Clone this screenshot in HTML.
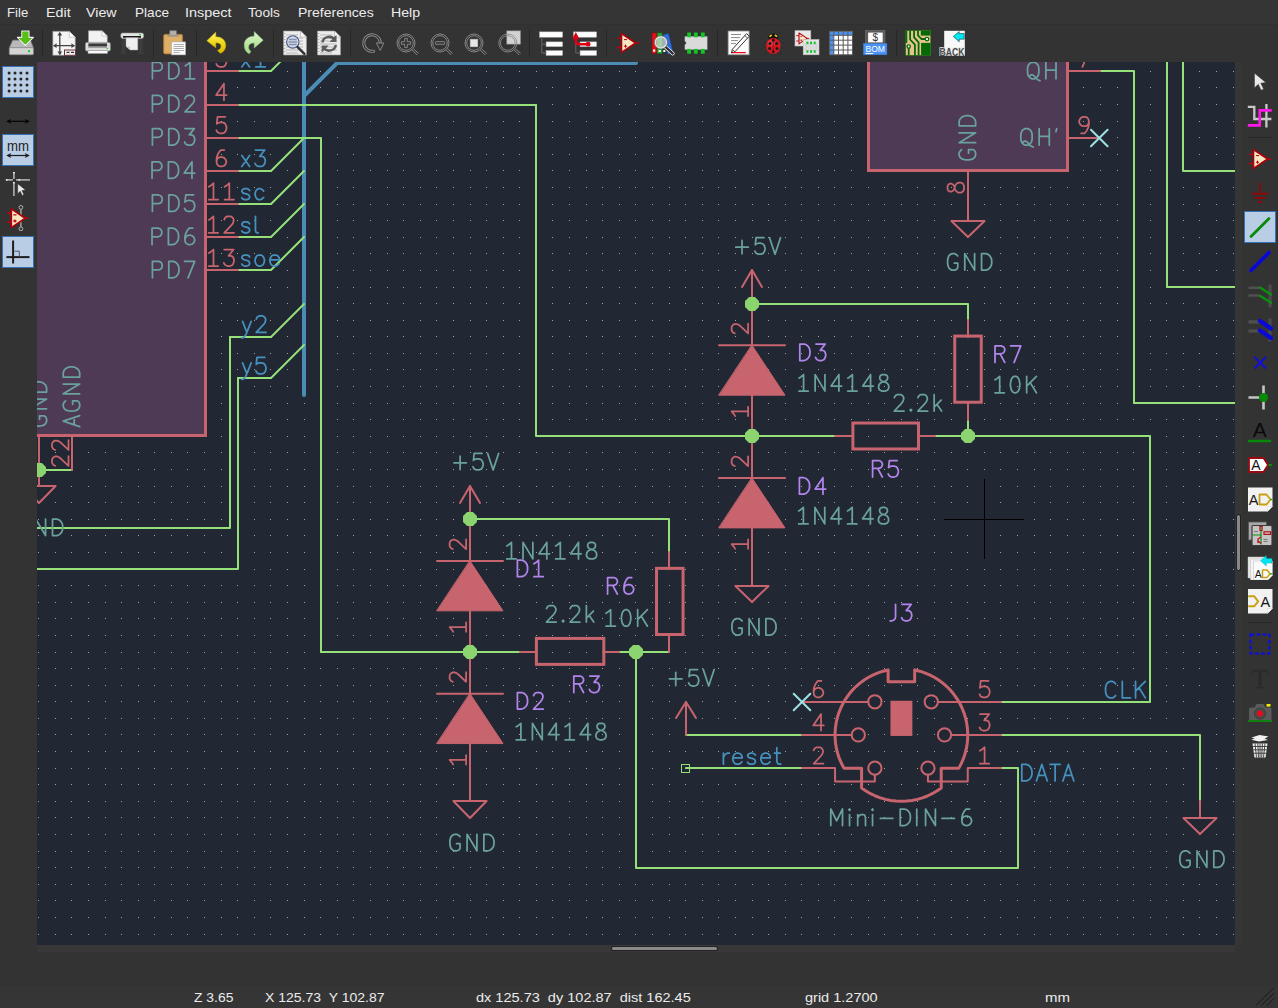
<!DOCTYPE html>
<html><head><meta charset="utf-8"><title>Eeschema</title>
<style>
html,body{margin:0;padding:0;}
body{width:1278px;height:1008px;overflow:hidden;background:#333333;position:relative;font-family:"Liberation Sans",sans-serif;color:#e6e6e6;}
#menubar{position:absolute;left:0;top:0;width:1278px;height:24px;background:#353535;border-bottom:1px solid #303030;}
#menubar span{position:absolute;top:4.7px;font-size:13px;line-height:16px;color:#ececec;white-space:nowrap;transform-origin:0 0;}
#canvas{position:absolute;left:37px;top:62px;width:1198px;height:883px;background:#222833;overflow:hidden;}
#canvas svg{position:absolute;left:0;top:0;}
#status span{position:absolute;top:989.7px;font-size:13px;line-height:16px;color:#ececec;white-space:pre;transform-origin:0 0;}
.ico{position:absolute;}
.sep{position:absolute;width:1px;background:#272727;}
.sel{position:absolute;width:30px;height:30px;background:#b9cde5;border:1px solid #3771b8;}
</style></head><body>
<div id="menubar">
<span style="left:7.4px;transform:scaleX(1.012)">File</span><span style="left:45.5px;transform:scaleX(1.098)">Edit</span><span style="left:86.4px;transform:scaleX(1.095)">View</span><span style="left:134.7px;transform:scaleX(1.045)">Place</span><span style="left:185.4px;transform:scaleX(1.112)">Inspect</span><span style="left:248.3px;transform:scaleX(1.051)">Tools</span><span style="left:297.6px;transform:scaleX(1.080)">Preferences</span><span style="left:390.6px;transform:scaleX(1.088)">Help</span>
</div>
<div id="canvas"><svg width="1198" height="883" viewBox="37 62 1198 883" fill="none" stroke-linecap="round" stroke-linejoin="round">
<path d="M38 71.5h1m16 0h1m15 0h1m16 0h1m16 0h1m15 0h1m16 0h1m15 0h1m16 0h1m15 0h1m16 0h1m16 0h1m15 0h1m16 0h1m15 0h1m16 0h1m16 0h1m15 0h1m16 0h1m15 0h1m16 0h1m16 0h1m15 0h1m16 0h1m15 0h1m16 0h1m16 0h1m15 0h1m16 0h1m15 0h1m16 0h1m15 0h1m16 0h1m16 0h1m15 0h1m16 0h1m15 0h1m16 0h1m16 0h1m15 0h1m16 0h1m15 0h1m16 0h1m16 0h1m15 0h1m16 0h1m15 0h1m16 0h1m15 0h1m16 0h1m16 0h1m15 0h1m16 0h1m15 0h1m16 0h1m16 0h1m15 0h1m16 0h1m15 0h1m16 0h1m16 0h1m15 0h1m16 0h1m15 0h1m16 0h1m16 0h1m15 0h1m16 0h1m15 0h1m16 0h1m15 0h1m16 0h1m16 0h1M38 87.5h1m16 0h1m15 0h1m16 0h1m16 0h1m15 0h1m16 0h1m15 0h1m16 0h1m15 0h1m16 0h1m16 0h1m15 0h1m16 0h1m15 0h1m16 0h1m16 0h1m15 0h1m16 0h1m15 0h1m16 0h1m16 0h1m15 0h1m16 0h1m15 0h1m16 0h1m16 0h1m15 0h1m16 0h1m15 0h1m16 0h1m15 0h1m16 0h1m16 0h1m15 0h1m16 0h1m15 0h1m16 0h1m16 0h1m15 0h1m16 0h1m15 0h1m16 0h1m16 0h1m15 0h1m16 0h1m15 0h1m16 0h1m15 0h1m16 0h1m16 0h1m15 0h1m16 0h1m15 0h1m16 0h1m16 0h1m15 0h1m16 0h1m15 0h1m16 0h1m16 0h1m15 0h1m16 0h1m15 0h1m16 0h1m16 0h1m15 0h1m16 0h1m15 0h1m16 0h1m15 0h1m16 0h1m16 0h1M38 104.5h1m16 0h1m15 0h1m16 0h1m16 0h1m15 0h1m16 0h1m15 0h1m16 0h1m15 0h1m16 0h1m16 0h1m15 0h1m16 0h1m15 0h1m16 0h1m16 0h1m15 0h1m16 0h1m15 0h1m16 0h1m16 0h1m15 0h1m16 0h1m15 0h1m16 0h1m16 0h1m15 0h1m16 0h1m15 0h1m16 0h1m15 0h1m16 0h1m16 0h1m15 0h1m16 0h1m15 0h1m16 0h1m16 0h1m15 0h1m16 0h1m15 0h1m16 0h1m16 0h1m15 0h1m16 0h1m15 0h1m16 0h1m15 0h1m16 0h1m16 0h1m15 0h1m16 0h1m15 0h1m16 0h1m16 0h1m15 0h1m16 0h1m15 0h1m16 0h1m16 0h1m15 0h1m16 0h1m15 0h1m16 0h1m16 0h1m15 0h1m16 0h1m15 0h1m16 0h1m15 0h1m16 0h1m16 0h1M38 121.5h1m16 0h1m15 0h1m16 0h1m16 0h1m15 0h1m16 0h1m15 0h1m16 0h1m15 0h1m16 0h1m16 0h1m15 0h1m16 0h1m15 0h1m16 0h1m16 0h1m15 0h1m16 0h1m15 0h1m16 0h1m16 0h1m15 0h1m16 0h1m15 0h1m16 0h1m16 0h1m15 0h1m16 0h1m15 0h1m16 0h1m15 0h1m16 0h1m16 0h1m15 0h1m16 0h1m15 0h1m16 0h1m16 0h1m15 0h1m16 0h1m15 0h1m16 0h1m16 0h1m15 0h1m16 0h1m15 0h1m16 0h1m15 0h1m16 0h1m16 0h1m15 0h1m16 0h1m15 0h1m16 0h1m16 0h1m15 0h1m16 0h1m15 0h1m16 0h1m16 0h1m15 0h1m16 0h1m15 0h1m16 0h1m16 0h1m15 0h1m16 0h1m15 0h1m16 0h1m15 0h1m16 0h1m16 0h1M38 137.5h1m16 0h1m15 0h1m16 0h1m16 0h1m15 0h1m16 0h1m15 0h1m16 0h1m15 0h1m16 0h1m16 0h1m15 0h1m16 0h1m15 0h1m16 0h1m16 0h1m15 0h1m16 0h1m15 0h1m16 0h1m16 0h1m15 0h1m16 0h1m15 0h1m16 0h1m16 0h1m15 0h1m16 0h1m15 0h1m16 0h1m15 0h1m16 0h1m16 0h1m15 0h1m16 0h1m15 0h1m16 0h1m16 0h1m15 0h1m16 0h1m15 0h1m16 0h1m16 0h1m15 0h1m16 0h1m15 0h1m16 0h1m15 0h1m16 0h1m16 0h1m15 0h1m16 0h1m15 0h1m16 0h1m16 0h1m15 0h1m16 0h1m15 0h1m16 0h1m16 0h1m15 0h1m16 0h1m15 0h1m16 0h1m16 0h1m15 0h1m16 0h1m15 0h1m16 0h1m15 0h1m16 0h1m16 0h1M38 154.5h1m16 0h1m15 0h1m16 0h1m16 0h1m15 0h1m16 0h1m15 0h1m16 0h1m15 0h1m16 0h1m16 0h1m15 0h1m16 0h1m15 0h1m16 0h1m16 0h1m15 0h1m16 0h1m15 0h1m16 0h1m16 0h1m15 0h1m16 0h1m15 0h1m16 0h1m16 0h1m15 0h1m16 0h1m15 0h1m16 0h1m15 0h1m16 0h1m16 0h1m15 0h1m16 0h1m15 0h1m16 0h1m16 0h1m15 0h1m16 0h1m15 0h1m16 0h1m16 0h1m15 0h1m16 0h1m15 0h1m16 0h1m15 0h1m16 0h1m16 0h1m15 0h1m16 0h1m15 0h1m16 0h1m16 0h1m15 0h1m16 0h1m15 0h1m16 0h1m16 0h1m15 0h1m16 0h1m15 0h1m16 0h1m16 0h1m15 0h1m16 0h1m15 0h1m16 0h1m15 0h1m16 0h1m16 0h1M38 170.5h1m16 0h1m15 0h1m16 0h1m16 0h1m15 0h1m16 0h1m15 0h1m16 0h1m15 0h1m16 0h1m16 0h1m15 0h1m16 0h1m15 0h1m16 0h1m16 0h1m15 0h1m16 0h1m15 0h1m16 0h1m16 0h1m15 0h1m16 0h1m15 0h1m16 0h1m16 0h1m15 0h1m16 0h1m15 0h1m16 0h1m15 0h1m16 0h1m16 0h1m15 0h1m16 0h1m15 0h1m16 0h1m16 0h1m15 0h1m16 0h1m15 0h1m16 0h1m16 0h1m15 0h1m16 0h1m15 0h1m16 0h1m15 0h1m16 0h1m16 0h1m15 0h1m16 0h1m15 0h1m16 0h1m16 0h1m15 0h1m16 0h1m15 0h1m16 0h1m16 0h1m15 0h1m16 0h1m15 0h1m16 0h1m16 0h1m15 0h1m16 0h1m15 0h1m16 0h1m15 0h1m16 0h1m16 0h1M38 187.5h1m16 0h1m15 0h1m16 0h1m16 0h1m15 0h1m16 0h1m15 0h1m16 0h1m15 0h1m16 0h1m16 0h1m15 0h1m16 0h1m15 0h1m16 0h1m16 0h1m15 0h1m16 0h1m15 0h1m16 0h1m16 0h1m15 0h1m16 0h1m15 0h1m16 0h1m16 0h1m15 0h1m16 0h1m15 0h1m16 0h1m15 0h1m16 0h1m16 0h1m15 0h1m16 0h1m15 0h1m16 0h1m16 0h1m15 0h1m16 0h1m15 0h1m16 0h1m16 0h1m15 0h1m16 0h1m15 0h1m16 0h1m15 0h1m16 0h1m16 0h1m15 0h1m16 0h1m15 0h1m16 0h1m16 0h1m15 0h1m16 0h1m15 0h1m16 0h1m16 0h1m15 0h1m16 0h1m15 0h1m16 0h1m16 0h1m15 0h1m16 0h1m15 0h1m16 0h1m15 0h1m16 0h1m16 0h1M38 204.5h1m16 0h1m15 0h1m16 0h1m16 0h1m15 0h1m16 0h1m15 0h1m16 0h1m15 0h1m16 0h1m16 0h1m15 0h1m16 0h1m15 0h1m16 0h1m16 0h1m15 0h1m16 0h1m15 0h1m16 0h1m16 0h1m15 0h1m16 0h1m15 0h1m16 0h1m16 0h1m15 0h1m16 0h1m15 0h1m16 0h1m15 0h1m16 0h1m16 0h1m15 0h1m16 0h1m15 0h1m16 0h1m16 0h1m15 0h1m16 0h1m15 0h1m16 0h1m16 0h1m15 0h1m16 0h1m15 0h1m16 0h1m15 0h1m16 0h1m16 0h1m15 0h1m16 0h1m15 0h1m16 0h1m16 0h1m15 0h1m16 0h1m15 0h1m16 0h1m16 0h1m15 0h1m16 0h1m15 0h1m16 0h1m16 0h1m15 0h1m16 0h1m15 0h1m16 0h1m15 0h1m16 0h1m16 0h1M38 220.5h1m16 0h1m15 0h1m16 0h1m16 0h1m15 0h1m16 0h1m15 0h1m16 0h1m15 0h1m16 0h1m16 0h1m15 0h1m16 0h1m15 0h1m16 0h1m16 0h1m15 0h1m16 0h1m15 0h1m16 0h1m16 0h1m15 0h1m16 0h1m15 0h1m16 0h1m16 0h1m15 0h1m16 0h1m15 0h1m16 0h1m15 0h1m16 0h1m16 0h1m15 0h1m16 0h1m15 0h1m16 0h1m16 0h1m15 0h1m16 0h1m15 0h1m16 0h1m16 0h1m15 0h1m16 0h1m15 0h1m16 0h1m15 0h1m16 0h1m16 0h1m15 0h1m16 0h1m15 0h1m16 0h1m16 0h1m15 0h1m16 0h1m15 0h1m16 0h1m16 0h1m15 0h1m16 0h1m15 0h1m16 0h1m16 0h1m15 0h1m16 0h1m15 0h1m16 0h1m15 0h1m16 0h1m16 0h1M38 237.5h1m16 0h1m15 0h1m16 0h1m16 0h1m15 0h1m16 0h1m15 0h1m16 0h1m15 0h1m16 0h1m16 0h1m15 0h1m16 0h1m15 0h1m16 0h1m16 0h1m15 0h1m16 0h1m15 0h1m16 0h1m16 0h1m15 0h1m16 0h1m15 0h1m16 0h1m16 0h1m15 0h1m16 0h1m15 0h1m16 0h1m15 0h1m16 0h1m16 0h1m15 0h1m16 0h1m15 0h1m16 0h1m16 0h1m15 0h1m16 0h1m15 0h1m16 0h1m16 0h1m15 0h1m16 0h1m15 0h1m16 0h1m15 0h1m16 0h1m16 0h1m15 0h1m16 0h1m15 0h1m16 0h1m16 0h1m15 0h1m16 0h1m15 0h1m16 0h1m16 0h1m15 0h1m16 0h1m15 0h1m16 0h1m16 0h1m15 0h1m16 0h1m15 0h1m16 0h1m15 0h1m16 0h1m16 0h1M38 253.5h1m16 0h1m15 0h1m16 0h1m16 0h1m15 0h1m16 0h1m15 0h1m16 0h1m15 0h1m16 0h1m16 0h1m15 0h1m16 0h1m15 0h1m16 0h1m16 0h1m15 0h1m16 0h1m15 0h1m16 0h1m16 0h1m15 0h1m16 0h1m15 0h1m16 0h1m16 0h1m15 0h1m16 0h1m15 0h1m16 0h1m15 0h1m16 0h1m16 0h1m15 0h1m16 0h1m15 0h1m16 0h1m16 0h1m15 0h1m16 0h1m15 0h1m16 0h1m16 0h1m15 0h1m16 0h1m15 0h1m16 0h1m15 0h1m16 0h1m16 0h1m15 0h1m16 0h1m15 0h1m16 0h1m16 0h1m15 0h1m16 0h1m15 0h1m16 0h1m16 0h1m15 0h1m16 0h1m15 0h1m16 0h1m16 0h1m15 0h1m16 0h1m15 0h1m16 0h1m15 0h1m16 0h1m16 0h1M38 270.5h1m16 0h1m15 0h1m16 0h1m16 0h1m15 0h1m16 0h1m15 0h1m16 0h1m15 0h1m16 0h1m16 0h1m15 0h1m16 0h1m15 0h1m16 0h1m16 0h1m15 0h1m16 0h1m15 0h1m16 0h1m16 0h1m15 0h1m16 0h1m15 0h1m16 0h1m16 0h1m15 0h1m16 0h1m15 0h1m16 0h1m15 0h1m16 0h1m16 0h1m15 0h1m16 0h1m15 0h1m16 0h1m16 0h1m15 0h1m16 0h1m15 0h1m16 0h1m16 0h1m15 0h1m16 0h1m15 0h1m16 0h1m15 0h1m16 0h1m16 0h1m15 0h1m16 0h1m15 0h1m16 0h1m16 0h1m15 0h1m16 0h1m15 0h1m16 0h1m16 0h1m15 0h1m16 0h1m15 0h1m16 0h1m16 0h1m15 0h1m16 0h1m15 0h1m16 0h1m15 0h1m16 0h1m16 0h1M38 287.5h1m16 0h1m15 0h1m16 0h1m16 0h1m15 0h1m16 0h1m15 0h1m16 0h1m15 0h1m16 0h1m16 0h1m15 0h1m16 0h1m15 0h1m16 0h1m16 0h1m15 0h1m16 0h1m15 0h1m16 0h1m16 0h1m15 0h1m16 0h1m15 0h1m16 0h1m16 0h1m15 0h1m16 0h1m15 0h1m16 0h1m15 0h1m16 0h1m16 0h1m15 0h1m16 0h1m15 0h1m16 0h1m16 0h1m15 0h1m16 0h1m15 0h1m16 0h1m16 0h1m15 0h1m16 0h1m15 0h1m16 0h1m15 0h1m16 0h1m16 0h1m15 0h1m16 0h1m15 0h1m16 0h1m16 0h1m15 0h1m16 0h1m15 0h1m16 0h1m16 0h1m15 0h1m16 0h1m15 0h1m16 0h1m16 0h1m15 0h1m16 0h1m15 0h1m16 0h1m15 0h1m16 0h1m16 0h1M38 303.5h1m16 0h1m15 0h1m16 0h1m16 0h1m15 0h1m16 0h1m15 0h1m16 0h1m15 0h1m16 0h1m16 0h1m15 0h1m16 0h1m15 0h1m16 0h1m16 0h1m15 0h1m16 0h1m15 0h1m16 0h1m16 0h1m15 0h1m16 0h1m15 0h1m16 0h1m16 0h1m15 0h1m16 0h1m15 0h1m16 0h1m15 0h1m16 0h1m16 0h1m15 0h1m16 0h1m15 0h1m16 0h1m16 0h1m15 0h1m16 0h1m15 0h1m16 0h1m16 0h1m15 0h1m16 0h1m15 0h1m16 0h1m15 0h1m16 0h1m16 0h1m15 0h1m16 0h1m15 0h1m16 0h1m16 0h1m15 0h1m16 0h1m15 0h1m16 0h1m16 0h1m15 0h1m16 0h1m15 0h1m16 0h1m16 0h1m15 0h1m16 0h1m15 0h1m16 0h1m15 0h1m16 0h1m16 0h1M38 320.5h1m16 0h1m15 0h1m16 0h1m16 0h1m15 0h1m16 0h1m15 0h1m16 0h1m15 0h1m16 0h1m16 0h1m15 0h1m16 0h1m15 0h1m16 0h1m16 0h1m15 0h1m16 0h1m15 0h1m16 0h1m16 0h1m15 0h1m16 0h1m15 0h1m16 0h1m16 0h1m15 0h1m16 0h1m15 0h1m16 0h1m15 0h1m16 0h1m16 0h1m15 0h1m16 0h1m15 0h1m16 0h1m16 0h1m15 0h1m16 0h1m15 0h1m16 0h1m16 0h1m15 0h1m16 0h1m15 0h1m16 0h1m15 0h1m16 0h1m16 0h1m15 0h1m16 0h1m15 0h1m16 0h1m16 0h1m15 0h1m16 0h1m15 0h1m16 0h1m16 0h1m15 0h1m16 0h1m15 0h1m16 0h1m16 0h1m15 0h1m16 0h1m15 0h1m16 0h1m15 0h1m16 0h1m16 0h1M38 336.5h1m16 0h1m15 0h1m16 0h1m16 0h1m15 0h1m16 0h1m15 0h1m16 0h1m15 0h1m16 0h1m16 0h1m15 0h1m16 0h1m15 0h1m16 0h1m16 0h1m15 0h1m16 0h1m15 0h1m16 0h1m16 0h1m15 0h1m16 0h1m15 0h1m16 0h1m16 0h1m15 0h1m16 0h1m15 0h1m16 0h1m15 0h1m16 0h1m16 0h1m15 0h1m16 0h1m15 0h1m16 0h1m16 0h1m15 0h1m16 0h1m15 0h1m16 0h1m16 0h1m15 0h1m16 0h1m15 0h1m16 0h1m15 0h1m16 0h1m16 0h1m15 0h1m16 0h1m15 0h1m16 0h1m16 0h1m15 0h1m16 0h1m15 0h1m16 0h1m16 0h1m15 0h1m16 0h1m15 0h1m16 0h1m16 0h1m15 0h1m16 0h1m15 0h1m16 0h1m15 0h1m16 0h1m16 0h1M38 353.5h1m16 0h1m15 0h1m16 0h1m16 0h1m15 0h1m16 0h1m15 0h1m16 0h1m15 0h1m16 0h1m16 0h1m15 0h1m16 0h1m15 0h1m16 0h1m16 0h1m15 0h1m16 0h1m15 0h1m16 0h1m16 0h1m15 0h1m16 0h1m15 0h1m16 0h1m16 0h1m15 0h1m16 0h1m15 0h1m16 0h1m15 0h1m16 0h1m16 0h1m15 0h1m16 0h1m15 0h1m16 0h1m16 0h1m15 0h1m16 0h1m15 0h1m16 0h1m16 0h1m15 0h1m16 0h1m15 0h1m16 0h1m15 0h1m16 0h1m16 0h1m15 0h1m16 0h1m15 0h1m16 0h1m16 0h1m15 0h1m16 0h1m15 0h1m16 0h1m16 0h1m15 0h1m16 0h1m15 0h1m16 0h1m16 0h1m15 0h1m16 0h1m15 0h1m16 0h1m15 0h1m16 0h1m16 0h1M38 369.5h1m16 0h1m15 0h1m16 0h1m16 0h1m15 0h1m16 0h1m15 0h1m16 0h1m15 0h1m16 0h1m16 0h1m15 0h1m16 0h1m15 0h1m16 0h1m16 0h1m15 0h1m16 0h1m15 0h1m16 0h1m16 0h1m15 0h1m16 0h1m15 0h1m16 0h1m16 0h1m15 0h1m16 0h1m15 0h1m16 0h1m15 0h1m16 0h1m16 0h1m15 0h1m16 0h1m15 0h1m16 0h1m16 0h1m15 0h1m16 0h1m15 0h1m16 0h1m16 0h1m15 0h1m16 0h1m15 0h1m16 0h1m15 0h1m16 0h1m16 0h1m15 0h1m16 0h1m15 0h1m16 0h1m16 0h1m15 0h1m16 0h1m15 0h1m16 0h1m16 0h1m15 0h1m16 0h1m15 0h1m16 0h1m16 0h1m15 0h1m16 0h1m15 0h1m16 0h1m15 0h1m16 0h1m16 0h1M38 386.5h1m16 0h1m15 0h1m16 0h1m16 0h1m15 0h1m16 0h1m15 0h1m16 0h1m15 0h1m16 0h1m16 0h1m15 0h1m16 0h1m15 0h1m16 0h1m16 0h1m15 0h1m16 0h1m15 0h1m16 0h1m16 0h1m15 0h1m16 0h1m15 0h1m16 0h1m16 0h1m15 0h1m16 0h1m15 0h1m16 0h1m15 0h1m16 0h1m16 0h1m15 0h1m16 0h1m15 0h1m16 0h1m16 0h1m15 0h1m16 0h1m15 0h1m16 0h1m16 0h1m15 0h1m16 0h1m15 0h1m16 0h1m15 0h1m16 0h1m16 0h1m15 0h1m16 0h1m15 0h1m16 0h1m16 0h1m15 0h1m16 0h1m15 0h1m16 0h1m16 0h1m15 0h1m16 0h1m15 0h1m16 0h1m16 0h1m15 0h1m16 0h1m15 0h1m16 0h1m15 0h1m16 0h1m16 0h1M38 403.5h1m16 0h1m15 0h1m16 0h1m16 0h1m15 0h1m16 0h1m15 0h1m16 0h1m15 0h1m16 0h1m16 0h1m15 0h1m16 0h1m15 0h1m16 0h1m16 0h1m15 0h1m16 0h1m15 0h1m16 0h1m16 0h1m15 0h1m16 0h1m15 0h1m16 0h1m16 0h1m15 0h1m16 0h1m15 0h1m16 0h1m15 0h1m16 0h1m16 0h1m15 0h1m16 0h1m15 0h1m16 0h1m16 0h1m15 0h1m16 0h1m15 0h1m16 0h1m16 0h1m15 0h1m16 0h1m15 0h1m16 0h1m15 0h1m16 0h1m16 0h1m15 0h1m16 0h1m15 0h1m16 0h1m16 0h1m15 0h1m16 0h1m15 0h1m16 0h1m16 0h1m15 0h1m16 0h1m15 0h1m16 0h1m16 0h1m15 0h1m16 0h1m15 0h1m16 0h1m15 0h1m16 0h1m16 0h1M38 419.5h1m16 0h1m15 0h1m16 0h1m16 0h1m15 0h1m16 0h1m15 0h1m16 0h1m15 0h1m16 0h1m16 0h1m15 0h1m16 0h1m15 0h1m16 0h1m16 0h1m15 0h1m16 0h1m15 0h1m16 0h1m16 0h1m15 0h1m16 0h1m15 0h1m16 0h1m16 0h1m15 0h1m16 0h1m15 0h1m16 0h1m15 0h1m16 0h1m16 0h1m15 0h1m16 0h1m15 0h1m16 0h1m16 0h1m15 0h1m16 0h1m15 0h1m16 0h1m16 0h1m15 0h1m16 0h1m15 0h1m16 0h1m15 0h1m16 0h1m16 0h1m15 0h1m16 0h1m15 0h1m16 0h1m16 0h1m15 0h1m16 0h1m15 0h1m16 0h1m16 0h1m15 0h1m16 0h1m15 0h1m16 0h1m16 0h1m15 0h1m16 0h1m15 0h1m16 0h1m15 0h1m16 0h1m16 0h1M38 436.5h1m16 0h1m15 0h1m16 0h1m16 0h1m15 0h1m16 0h1m15 0h1m16 0h1m15 0h1m16 0h1m16 0h1m15 0h1m16 0h1m15 0h1m16 0h1m16 0h1m15 0h1m16 0h1m15 0h1m16 0h1m16 0h1m15 0h1m16 0h1m15 0h1m16 0h1m16 0h1m15 0h1m16 0h1m15 0h1m16 0h1m15 0h1m16 0h1m16 0h1m15 0h1m16 0h1m15 0h1m16 0h1m16 0h1m15 0h1m16 0h1m15 0h1m16 0h1m16 0h1m15 0h1m16 0h1m15 0h1m16 0h1m15 0h1m16 0h1m16 0h1m15 0h1m16 0h1m15 0h1m16 0h1m16 0h1m15 0h1m16 0h1m15 0h1m16 0h1m16 0h1m15 0h1m16 0h1m15 0h1m16 0h1m16 0h1m15 0h1m16 0h1m15 0h1m16 0h1m15 0h1m16 0h1m16 0h1M38 452.5h1m16 0h1m15 0h1m16 0h1m16 0h1m15 0h1m16 0h1m15 0h1m16 0h1m15 0h1m16 0h1m16 0h1m15 0h1m16 0h1m15 0h1m16 0h1m16 0h1m15 0h1m16 0h1m15 0h1m16 0h1m16 0h1m15 0h1m16 0h1m15 0h1m16 0h1m16 0h1m15 0h1m16 0h1m15 0h1m16 0h1m15 0h1m16 0h1m16 0h1m15 0h1m16 0h1m15 0h1m16 0h1m16 0h1m15 0h1m16 0h1m15 0h1m16 0h1m16 0h1m15 0h1m16 0h1m15 0h1m16 0h1m15 0h1m16 0h1m16 0h1m15 0h1m16 0h1m15 0h1m16 0h1m16 0h1m15 0h1m16 0h1m15 0h1m16 0h1m16 0h1m15 0h1m16 0h1m15 0h1m16 0h1m16 0h1m15 0h1m16 0h1m15 0h1m16 0h1m15 0h1m16 0h1m16 0h1M38 469.5h1m16 0h1m15 0h1m16 0h1m16 0h1m15 0h1m16 0h1m15 0h1m16 0h1m15 0h1m16 0h1m16 0h1m15 0h1m16 0h1m15 0h1m16 0h1m16 0h1m15 0h1m16 0h1m15 0h1m16 0h1m16 0h1m15 0h1m16 0h1m15 0h1m16 0h1m16 0h1m15 0h1m16 0h1m15 0h1m16 0h1m15 0h1m16 0h1m16 0h1m15 0h1m16 0h1m15 0h1m16 0h1m16 0h1m15 0h1m16 0h1m15 0h1m16 0h1m16 0h1m15 0h1m16 0h1m15 0h1m16 0h1m15 0h1m16 0h1m16 0h1m15 0h1m16 0h1m15 0h1m16 0h1m16 0h1m15 0h1m16 0h1m15 0h1m16 0h1m16 0h1m15 0h1m16 0h1m15 0h1m16 0h1m16 0h1m15 0h1m16 0h1m15 0h1m16 0h1m15 0h1m16 0h1m16 0h1M38 486.5h1m16 0h1m15 0h1m16 0h1m16 0h1m15 0h1m16 0h1m15 0h1m16 0h1m15 0h1m16 0h1m16 0h1m15 0h1m16 0h1m15 0h1m16 0h1m16 0h1m15 0h1m16 0h1m15 0h1m16 0h1m16 0h1m15 0h1m16 0h1m15 0h1m16 0h1m16 0h1m15 0h1m16 0h1m15 0h1m16 0h1m15 0h1m16 0h1m16 0h1m15 0h1m16 0h1m15 0h1m16 0h1m16 0h1m15 0h1m16 0h1m15 0h1m16 0h1m16 0h1m15 0h1m16 0h1m15 0h1m16 0h1m15 0h1m16 0h1m16 0h1m15 0h1m16 0h1m15 0h1m16 0h1m16 0h1m15 0h1m16 0h1m15 0h1m16 0h1m16 0h1m15 0h1m16 0h1m15 0h1m16 0h1m16 0h1m15 0h1m16 0h1m15 0h1m16 0h1m15 0h1m16 0h1m16 0h1M38 502.5h1m16 0h1m15 0h1m16 0h1m16 0h1m15 0h1m16 0h1m15 0h1m16 0h1m15 0h1m16 0h1m16 0h1m15 0h1m16 0h1m15 0h1m16 0h1m16 0h1m15 0h1m16 0h1m15 0h1m16 0h1m16 0h1m15 0h1m16 0h1m15 0h1m16 0h1m16 0h1m15 0h1m16 0h1m15 0h1m16 0h1m15 0h1m16 0h1m16 0h1m15 0h1m16 0h1m15 0h1m16 0h1m16 0h1m15 0h1m16 0h1m15 0h1m16 0h1m16 0h1m15 0h1m16 0h1m15 0h1m16 0h1m15 0h1m16 0h1m16 0h1m15 0h1m16 0h1m15 0h1m16 0h1m16 0h1m15 0h1m16 0h1m15 0h1m16 0h1m16 0h1m15 0h1m16 0h1m15 0h1m16 0h1m16 0h1m15 0h1m16 0h1m15 0h1m16 0h1m15 0h1m16 0h1m16 0h1M38 519.5h1m16 0h1m15 0h1m16 0h1m16 0h1m15 0h1m16 0h1m15 0h1m16 0h1m15 0h1m16 0h1m16 0h1m15 0h1m16 0h1m15 0h1m16 0h1m16 0h1m15 0h1m16 0h1m15 0h1m16 0h1m16 0h1m15 0h1m16 0h1m15 0h1m16 0h1m16 0h1m15 0h1m16 0h1m15 0h1m16 0h1m15 0h1m16 0h1m16 0h1m15 0h1m16 0h1m15 0h1m16 0h1m16 0h1m15 0h1m16 0h1m15 0h1m16 0h1m16 0h1m15 0h1m16 0h1m15 0h1m16 0h1m15 0h1m16 0h1m16 0h1m15 0h1m16 0h1m15 0h1m16 0h1m16 0h1m15 0h1m16 0h1m15 0h1m16 0h1m16 0h1m15 0h1m16 0h1m15 0h1m16 0h1m16 0h1m15 0h1m16 0h1m15 0h1m16 0h1m15 0h1m16 0h1m16 0h1M38 535.5h1m16 0h1m15 0h1m16 0h1m16 0h1m15 0h1m16 0h1m15 0h1m16 0h1m15 0h1m16 0h1m16 0h1m15 0h1m16 0h1m15 0h1m16 0h1m16 0h1m15 0h1m16 0h1m15 0h1m16 0h1m16 0h1m15 0h1m16 0h1m15 0h1m16 0h1m16 0h1m15 0h1m16 0h1m15 0h1m16 0h1m15 0h1m16 0h1m16 0h1m15 0h1m16 0h1m15 0h1m16 0h1m16 0h1m15 0h1m16 0h1m15 0h1m16 0h1m16 0h1m15 0h1m16 0h1m15 0h1m16 0h1m15 0h1m16 0h1m16 0h1m15 0h1m16 0h1m15 0h1m16 0h1m16 0h1m15 0h1m16 0h1m15 0h1m16 0h1m16 0h1m15 0h1m16 0h1m15 0h1m16 0h1m16 0h1m15 0h1m16 0h1m15 0h1m16 0h1m15 0h1m16 0h1m16 0h1M38 552.5h1m16 0h1m15 0h1m16 0h1m16 0h1m15 0h1m16 0h1m15 0h1m16 0h1m15 0h1m16 0h1m16 0h1m15 0h1m16 0h1m15 0h1m16 0h1m16 0h1m15 0h1m16 0h1m15 0h1m16 0h1m16 0h1m15 0h1m16 0h1m15 0h1m16 0h1m16 0h1m15 0h1m16 0h1m15 0h1m16 0h1m15 0h1m16 0h1m16 0h1m15 0h1m16 0h1m15 0h1m16 0h1m16 0h1m15 0h1m16 0h1m15 0h1m16 0h1m16 0h1m15 0h1m16 0h1m15 0h1m16 0h1m15 0h1m16 0h1m16 0h1m15 0h1m16 0h1m15 0h1m16 0h1m16 0h1m15 0h1m16 0h1m15 0h1m16 0h1m16 0h1m15 0h1m16 0h1m15 0h1m16 0h1m16 0h1m15 0h1m16 0h1m15 0h1m16 0h1m15 0h1m16 0h1m16 0h1M38 569.5h1m16 0h1m15 0h1m16 0h1m16 0h1m15 0h1m16 0h1m15 0h1m16 0h1m15 0h1m16 0h1m16 0h1m15 0h1m16 0h1m15 0h1m16 0h1m16 0h1m15 0h1m16 0h1m15 0h1m16 0h1m16 0h1m15 0h1m16 0h1m15 0h1m16 0h1m16 0h1m15 0h1m16 0h1m15 0h1m16 0h1m15 0h1m16 0h1m16 0h1m15 0h1m16 0h1m15 0h1m16 0h1m16 0h1m15 0h1m16 0h1m15 0h1m16 0h1m16 0h1m15 0h1m16 0h1m15 0h1m16 0h1m15 0h1m16 0h1m16 0h1m15 0h1m16 0h1m15 0h1m16 0h1m16 0h1m15 0h1m16 0h1m15 0h1m16 0h1m16 0h1m15 0h1m16 0h1m15 0h1m16 0h1m16 0h1m15 0h1m16 0h1m15 0h1m16 0h1m15 0h1m16 0h1m16 0h1M38 585.5h1m16 0h1m15 0h1m16 0h1m16 0h1m15 0h1m16 0h1m15 0h1m16 0h1m15 0h1m16 0h1m16 0h1m15 0h1m16 0h1m15 0h1m16 0h1m16 0h1m15 0h1m16 0h1m15 0h1m16 0h1m16 0h1m15 0h1m16 0h1m15 0h1m16 0h1m16 0h1m15 0h1m16 0h1m15 0h1m16 0h1m15 0h1m16 0h1m16 0h1m15 0h1m16 0h1m15 0h1m16 0h1m16 0h1m15 0h1m16 0h1m15 0h1m16 0h1m16 0h1m15 0h1m16 0h1m15 0h1m16 0h1m15 0h1m16 0h1m16 0h1m15 0h1m16 0h1m15 0h1m16 0h1m16 0h1m15 0h1m16 0h1m15 0h1m16 0h1m16 0h1m15 0h1m16 0h1m15 0h1m16 0h1m16 0h1m15 0h1m16 0h1m15 0h1m16 0h1m15 0h1m16 0h1m16 0h1M38 602.5h1m16 0h1m15 0h1m16 0h1m16 0h1m15 0h1m16 0h1m15 0h1m16 0h1m15 0h1m16 0h1m16 0h1m15 0h1m16 0h1m15 0h1m16 0h1m16 0h1m15 0h1m16 0h1m15 0h1m16 0h1m16 0h1m15 0h1m16 0h1m15 0h1m16 0h1m16 0h1m15 0h1m16 0h1m15 0h1m16 0h1m15 0h1m16 0h1m16 0h1m15 0h1m16 0h1m15 0h1m16 0h1m16 0h1m15 0h1m16 0h1m15 0h1m16 0h1m16 0h1m15 0h1m16 0h1m15 0h1m16 0h1m15 0h1m16 0h1m16 0h1m15 0h1m16 0h1m15 0h1m16 0h1m16 0h1m15 0h1m16 0h1m15 0h1m16 0h1m16 0h1m15 0h1m16 0h1m15 0h1m16 0h1m16 0h1m15 0h1m16 0h1m15 0h1m16 0h1m15 0h1m16 0h1m16 0h1M38 618.5h1m16 0h1m15 0h1m16 0h1m16 0h1m15 0h1m16 0h1m15 0h1m16 0h1m15 0h1m16 0h1m16 0h1m15 0h1m16 0h1m15 0h1m16 0h1m16 0h1m15 0h1m16 0h1m15 0h1m16 0h1m16 0h1m15 0h1m16 0h1m15 0h1m16 0h1m16 0h1m15 0h1m16 0h1m15 0h1m16 0h1m15 0h1m16 0h1m16 0h1m15 0h1m16 0h1m15 0h1m16 0h1m16 0h1m15 0h1m16 0h1m15 0h1m16 0h1m16 0h1m15 0h1m16 0h1m15 0h1m16 0h1m15 0h1m16 0h1m16 0h1m15 0h1m16 0h1m15 0h1m16 0h1m16 0h1m15 0h1m16 0h1m15 0h1m16 0h1m16 0h1m15 0h1m16 0h1m15 0h1m16 0h1m16 0h1m15 0h1m16 0h1m15 0h1m16 0h1m15 0h1m16 0h1m16 0h1M38 635.5h1m16 0h1m15 0h1m16 0h1m16 0h1m15 0h1m16 0h1m15 0h1m16 0h1m15 0h1m16 0h1m16 0h1m15 0h1m16 0h1m15 0h1m16 0h1m16 0h1m15 0h1m16 0h1m15 0h1m16 0h1m16 0h1m15 0h1m16 0h1m15 0h1m16 0h1m16 0h1m15 0h1m16 0h1m15 0h1m16 0h1m15 0h1m16 0h1m16 0h1m15 0h1m16 0h1m15 0h1m16 0h1m16 0h1m15 0h1m16 0h1m15 0h1m16 0h1m16 0h1m15 0h1m16 0h1m15 0h1m16 0h1m15 0h1m16 0h1m16 0h1m15 0h1m16 0h1m15 0h1m16 0h1m16 0h1m15 0h1m16 0h1m15 0h1m16 0h1m16 0h1m15 0h1m16 0h1m15 0h1m16 0h1m16 0h1m15 0h1m16 0h1m15 0h1m16 0h1m15 0h1m16 0h1m16 0h1M38 652.5h1m16 0h1m15 0h1m16 0h1m16 0h1m15 0h1m16 0h1m15 0h1m16 0h1m15 0h1m16 0h1m16 0h1m15 0h1m16 0h1m15 0h1m16 0h1m16 0h1m15 0h1m16 0h1m15 0h1m16 0h1m16 0h1m15 0h1m16 0h1m15 0h1m16 0h1m16 0h1m15 0h1m16 0h1m15 0h1m16 0h1m15 0h1m16 0h1m16 0h1m15 0h1m16 0h1m15 0h1m16 0h1m16 0h1m15 0h1m16 0h1m15 0h1m16 0h1m16 0h1m15 0h1m16 0h1m15 0h1m16 0h1m15 0h1m16 0h1m16 0h1m15 0h1m16 0h1m15 0h1m16 0h1m16 0h1m15 0h1m16 0h1m15 0h1m16 0h1m16 0h1m15 0h1m16 0h1m15 0h1m16 0h1m16 0h1m15 0h1m16 0h1m15 0h1m16 0h1m15 0h1m16 0h1m16 0h1M38 668.5h1m16 0h1m15 0h1m16 0h1m16 0h1m15 0h1m16 0h1m15 0h1m16 0h1m15 0h1m16 0h1m16 0h1m15 0h1m16 0h1m15 0h1m16 0h1m16 0h1m15 0h1m16 0h1m15 0h1m16 0h1m16 0h1m15 0h1m16 0h1m15 0h1m16 0h1m16 0h1m15 0h1m16 0h1m15 0h1m16 0h1m15 0h1m16 0h1m16 0h1m15 0h1m16 0h1m15 0h1m16 0h1m16 0h1m15 0h1m16 0h1m15 0h1m16 0h1m16 0h1m15 0h1m16 0h1m15 0h1m16 0h1m15 0h1m16 0h1m16 0h1m15 0h1m16 0h1m15 0h1m16 0h1m16 0h1m15 0h1m16 0h1m15 0h1m16 0h1m16 0h1m15 0h1m16 0h1m15 0h1m16 0h1m16 0h1m15 0h1m16 0h1m15 0h1m16 0h1m15 0h1m16 0h1m16 0h1M38 685.5h1m16 0h1m15 0h1m16 0h1m16 0h1m15 0h1m16 0h1m15 0h1m16 0h1m15 0h1m16 0h1m16 0h1m15 0h1m16 0h1m15 0h1m16 0h1m16 0h1m15 0h1m16 0h1m15 0h1m16 0h1m16 0h1m15 0h1m16 0h1m15 0h1m16 0h1m16 0h1m15 0h1m16 0h1m15 0h1m16 0h1m15 0h1m16 0h1m16 0h1m15 0h1m16 0h1m15 0h1m16 0h1m16 0h1m15 0h1m16 0h1m15 0h1m16 0h1m16 0h1m15 0h1m16 0h1m15 0h1m16 0h1m15 0h1m16 0h1m16 0h1m15 0h1m16 0h1m15 0h1m16 0h1m16 0h1m15 0h1m16 0h1m15 0h1m16 0h1m16 0h1m15 0h1m16 0h1m15 0h1m16 0h1m16 0h1m15 0h1m16 0h1m15 0h1m16 0h1m15 0h1m16 0h1m16 0h1M38 701.5h1m16 0h1m15 0h1m16 0h1m16 0h1m15 0h1m16 0h1m15 0h1m16 0h1m15 0h1m16 0h1m16 0h1m15 0h1m16 0h1m15 0h1m16 0h1m16 0h1m15 0h1m16 0h1m15 0h1m16 0h1m16 0h1m15 0h1m16 0h1m15 0h1m16 0h1m16 0h1m15 0h1m16 0h1m15 0h1m16 0h1m15 0h1m16 0h1m16 0h1m15 0h1m16 0h1m15 0h1m16 0h1m16 0h1m15 0h1m16 0h1m15 0h1m16 0h1m16 0h1m15 0h1m16 0h1m15 0h1m16 0h1m15 0h1m16 0h1m16 0h1m15 0h1m16 0h1m15 0h1m16 0h1m16 0h1m15 0h1m16 0h1m15 0h1m16 0h1m16 0h1m15 0h1m16 0h1m15 0h1m16 0h1m16 0h1m15 0h1m16 0h1m15 0h1m16 0h1m15 0h1m16 0h1m16 0h1M38 718.5h1m16 0h1m15 0h1m16 0h1m16 0h1m15 0h1m16 0h1m15 0h1m16 0h1m15 0h1m16 0h1m16 0h1m15 0h1m16 0h1m15 0h1m16 0h1m16 0h1m15 0h1m16 0h1m15 0h1m16 0h1m16 0h1m15 0h1m16 0h1m15 0h1m16 0h1m16 0h1m15 0h1m16 0h1m15 0h1m16 0h1m15 0h1m16 0h1m16 0h1m15 0h1m16 0h1m15 0h1m16 0h1m16 0h1m15 0h1m16 0h1m15 0h1m16 0h1m16 0h1m15 0h1m16 0h1m15 0h1m16 0h1m15 0h1m16 0h1m16 0h1m15 0h1m16 0h1m15 0h1m16 0h1m16 0h1m15 0h1m16 0h1m15 0h1m16 0h1m16 0h1m15 0h1m16 0h1m15 0h1m16 0h1m16 0h1m15 0h1m16 0h1m15 0h1m16 0h1m15 0h1m16 0h1m16 0h1M38 734.5h1m16 0h1m15 0h1m16 0h1m16 0h1m15 0h1m16 0h1m15 0h1m16 0h1m15 0h1m16 0h1m16 0h1m15 0h1m16 0h1m15 0h1m16 0h1m16 0h1m15 0h1m16 0h1m15 0h1m16 0h1m16 0h1m15 0h1m16 0h1m15 0h1m16 0h1m16 0h1m15 0h1m16 0h1m15 0h1m16 0h1m15 0h1m16 0h1m16 0h1m15 0h1m16 0h1m15 0h1m16 0h1m16 0h1m15 0h1m16 0h1m15 0h1m16 0h1m16 0h1m15 0h1m16 0h1m15 0h1m16 0h1m15 0h1m16 0h1m16 0h1m15 0h1m16 0h1m15 0h1m16 0h1m16 0h1m15 0h1m16 0h1m15 0h1m16 0h1m16 0h1m15 0h1m16 0h1m15 0h1m16 0h1m16 0h1m15 0h1m16 0h1m15 0h1m16 0h1m15 0h1m16 0h1m16 0h1M38 751.5h1m16 0h1m15 0h1m16 0h1m16 0h1m15 0h1m16 0h1m15 0h1m16 0h1m15 0h1m16 0h1m16 0h1m15 0h1m16 0h1m15 0h1m16 0h1m16 0h1m15 0h1m16 0h1m15 0h1m16 0h1m16 0h1m15 0h1m16 0h1m15 0h1m16 0h1m16 0h1m15 0h1m16 0h1m15 0h1m16 0h1m15 0h1m16 0h1m16 0h1m15 0h1m16 0h1m15 0h1m16 0h1m16 0h1m15 0h1m16 0h1m15 0h1m16 0h1m16 0h1m15 0h1m16 0h1m15 0h1m16 0h1m15 0h1m16 0h1m16 0h1m15 0h1m16 0h1m15 0h1m16 0h1m16 0h1m15 0h1m16 0h1m15 0h1m16 0h1m16 0h1m15 0h1m16 0h1m15 0h1m16 0h1m16 0h1m15 0h1m16 0h1m15 0h1m16 0h1m15 0h1m16 0h1m16 0h1M38 768.5h1m16 0h1m15 0h1m16 0h1m16 0h1m15 0h1m16 0h1m15 0h1m16 0h1m15 0h1m16 0h1m16 0h1m15 0h1m16 0h1m15 0h1m16 0h1m16 0h1m15 0h1m16 0h1m15 0h1m16 0h1m16 0h1m15 0h1m16 0h1m15 0h1m16 0h1m16 0h1m15 0h1m16 0h1m15 0h1m16 0h1m15 0h1m16 0h1m16 0h1m15 0h1m16 0h1m15 0h1m16 0h1m16 0h1m15 0h1m16 0h1m15 0h1m16 0h1m16 0h1m15 0h1m16 0h1m15 0h1m16 0h1m15 0h1m16 0h1m16 0h1m15 0h1m16 0h1m15 0h1m16 0h1m16 0h1m15 0h1m16 0h1m15 0h1m16 0h1m16 0h1m15 0h1m16 0h1m15 0h1m16 0h1m16 0h1m15 0h1m16 0h1m15 0h1m16 0h1m15 0h1m16 0h1m16 0h1M38 784.5h1m16 0h1m15 0h1m16 0h1m16 0h1m15 0h1m16 0h1m15 0h1m16 0h1m15 0h1m16 0h1m16 0h1m15 0h1m16 0h1m15 0h1m16 0h1m16 0h1m15 0h1m16 0h1m15 0h1m16 0h1m16 0h1m15 0h1m16 0h1m15 0h1m16 0h1m16 0h1m15 0h1m16 0h1m15 0h1m16 0h1m15 0h1m16 0h1m16 0h1m15 0h1m16 0h1m15 0h1m16 0h1m16 0h1m15 0h1m16 0h1m15 0h1m16 0h1m16 0h1m15 0h1m16 0h1m15 0h1m16 0h1m15 0h1m16 0h1m16 0h1m15 0h1m16 0h1m15 0h1m16 0h1m16 0h1m15 0h1m16 0h1m15 0h1m16 0h1m16 0h1m15 0h1m16 0h1m15 0h1m16 0h1m16 0h1m15 0h1m16 0h1m15 0h1m16 0h1m15 0h1m16 0h1m16 0h1M38 801.5h1m16 0h1m15 0h1m16 0h1m16 0h1m15 0h1m16 0h1m15 0h1m16 0h1m15 0h1m16 0h1m16 0h1m15 0h1m16 0h1m15 0h1m16 0h1m16 0h1m15 0h1m16 0h1m15 0h1m16 0h1m16 0h1m15 0h1m16 0h1m15 0h1m16 0h1m16 0h1m15 0h1m16 0h1m15 0h1m16 0h1m15 0h1m16 0h1m16 0h1m15 0h1m16 0h1m15 0h1m16 0h1m16 0h1m15 0h1m16 0h1m15 0h1m16 0h1m16 0h1m15 0h1m16 0h1m15 0h1m16 0h1m15 0h1m16 0h1m16 0h1m15 0h1m16 0h1m15 0h1m16 0h1m16 0h1m15 0h1m16 0h1m15 0h1m16 0h1m16 0h1m15 0h1m16 0h1m15 0h1m16 0h1m16 0h1m15 0h1m16 0h1m15 0h1m16 0h1m15 0h1m16 0h1m16 0h1M38 817.5h1m16 0h1m15 0h1m16 0h1m16 0h1m15 0h1m16 0h1m15 0h1m16 0h1m15 0h1m16 0h1m16 0h1m15 0h1m16 0h1m15 0h1m16 0h1m16 0h1m15 0h1m16 0h1m15 0h1m16 0h1m16 0h1m15 0h1m16 0h1m15 0h1m16 0h1m16 0h1m15 0h1m16 0h1m15 0h1m16 0h1m15 0h1m16 0h1m16 0h1m15 0h1m16 0h1m15 0h1m16 0h1m16 0h1m15 0h1m16 0h1m15 0h1m16 0h1m16 0h1m15 0h1m16 0h1m15 0h1m16 0h1m15 0h1m16 0h1m16 0h1m15 0h1m16 0h1m15 0h1m16 0h1m16 0h1m15 0h1m16 0h1m15 0h1m16 0h1m16 0h1m15 0h1m16 0h1m15 0h1m16 0h1m16 0h1m15 0h1m16 0h1m15 0h1m16 0h1m15 0h1m16 0h1m16 0h1M38 834.5h1m16 0h1m15 0h1m16 0h1m16 0h1m15 0h1m16 0h1m15 0h1m16 0h1m15 0h1m16 0h1m16 0h1m15 0h1m16 0h1m15 0h1m16 0h1m16 0h1m15 0h1m16 0h1m15 0h1m16 0h1m16 0h1m15 0h1m16 0h1m15 0h1m16 0h1m16 0h1m15 0h1m16 0h1m15 0h1m16 0h1m15 0h1m16 0h1m16 0h1m15 0h1m16 0h1m15 0h1m16 0h1m16 0h1m15 0h1m16 0h1m15 0h1m16 0h1m16 0h1m15 0h1m16 0h1m15 0h1m16 0h1m15 0h1m16 0h1m16 0h1m15 0h1m16 0h1m15 0h1m16 0h1m16 0h1m15 0h1m16 0h1m15 0h1m16 0h1m16 0h1m15 0h1m16 0h1m15 0h1m16 0h1m16 0h1m15 0h1m16 0h1m15 0h1m16 0h1m15 0h1m16 0h1m16 0h1M38 851.5h1m16 0h1m15 0h1m16 0h1m16 0h1m15 0h1m16 0h1m15 0h1m16 0h1m15 0h1m16 0h1m16 0h1m15 0h1m16 0h1m15 0h1m16 0h1m16 0h1m15 0h1m16 0h1m15 0h1m16 0h1m16 0h1m15 0h1m16 0h1m15 0h1m16 0h1m16 0h1m15 0h1m16 0h1m15 0h1m16 0h1m15 0h1m16 0h1m16 0h1m15 0h1m16 0h1m15 0h1m16 0h1m16 0h1m15 0h1m16 0h1m15 0h1m16 0h1m16 0h1m15 0h1m16 0h1m15 0h1m16 0h1m15 0h1m16 0h1m16 0h1m15 0h1m16 0h1m15 0h1m16 0h1m16 0h1m15 0h1m16 0h1m15 0h1m16 0h1m16 0h1m15 0h1m16 0h1m15 0h1m16 0h1m16 0h1m15 0h1m16 0h1m15 0h1m16 0h1m15 0h1m16 0h1m16 0h1M38 867.5h1m16 0h1m15 0h1m16 0h1m16 0h1m15 0h1m16 0h1m15 0h1m16 0h1m15 0h1m16 0h1m16 0h1m15 0h1m16 0h1m15 0h1m16 0h1m16 0h1m15 0h1m16 0h1m15 0h1m16 0h1m16 0h1m15 0h1m16 0h1m15 0h1m16 0h1m16 0h1m15 0h1m16 0h1m15 0h1m16 0h1m15 0h1m16 0h1m16 0h1m15 0h1m16 0h1m15 0h1m16 0h1m16 0h1m15 0h1m16 0h1m15 0h1m16 0h1m16 0h1m15 0h1m16 0h1m15 0h1m16 0h1m15 0h1m16 0h1m16 0h1m15 0h1m16 0h1m15 0h1m16 0h1m16 0h1m15 0h1m16 0h1m15 0h1m16 0h1m16 0h1m15 0h1m16 0h1m15 0h1m16 0h1m16 0h1m15 0h1m16 0h1m15 0h1m16 0h1m15 0h1m16 0h1m16 0h1M38 884.5h1m16 0h1m15 0h1m16 0h1m16 0h1m15 0h1m16 0h1m15 0h1m16 0h1m15 0h1m16 0h1m16 0h1m15 0h1m16 0h1m15 0h1m16 0h1m16 0h1m15 0h1m16 0h1m15 0h1m16 0h1m16 0h1m15 0h1m16 0h1m15 0h1m16 0h1m16 0h1m15 0h1m16 0h1m15 0h1m16 0h1m15 0h1m16 0h1m16 0h1m15 0h1m16 0h1m15 0h1m16 0h1m16 0h1m15 0h1m16 0h1m15 0h1m16 0h1m16 0h1m15 0h1m16 0h1m15 0h1m16 0h1m15 0h1m16 0h1m16 0h1m15 0h1m16 0h1m15 0h1m16 0h1m16 0h1m15 0h1m16 0h1m15 0h1m16 0h1m16 0h1m15 0h1m16 0h1m15 0h1m16 0h1m16 0h1m15 0h1m16 0h1m15 0h1m16 0h1m15 0h1m16 0h1m16 0h1M38 900.5h1m16 0h1m15 0h1m16 0h1m16 0h1m15 0h1m16 0h1m15 0h1m16 0h1m15 0h1m16 0h1m16 0h1m15 0h1m16 0h1m15 0h1m16 0h1m16 0h1m15 0h1m16 0h1m15 0h1m16 0h1m16 0h1m15 0h1m16 0h1m15 0h1m16 0h1m16 0h1m15 0h1m16 0h1m15 0h1m16 0h1m15 0h1m16 0h1m16 0h1m15 0h1m16 0h1m15 0h1m16 0h1m16 0h1m15 0h1m16 0h1m15 0h1m16 0h1m16 0h1m15 0h1m16 0h1m15 0h1m16 0h1m15 0h1m16 0h1m16 0h1m15 0h1m16 0h1m15 0h1m16 0h1m16 0h1m15 0h1m16 0h1m15 0h1m16 0h1m16 0h1m15 0h1m16 0h1m15 0h1m16 0h1m16 0h1m15 0h1m16 0h1m15 0h1m16 0h1m15 0h1m16 0h1m16 0h1M38 917.5h1m16 0h1m15 0h1m16 0h1m16 0h1m15 0h1m16 0h1m15 0h1m16 0h1m15 0h1m16 0h1m16 0h1m15 0h1m16 0h1m15 0h1m16 0h1m16 0h1m15 0h1m16 0h1m15 0h1m16 0h1m16 0h1m15 0h1m16 0h1m15 0h1m16 0h1m16 0h1m15 0h1m16 0h1m15 0h1m16 0h1m15 0h1m16 0h1m16 0h1m15 0h1m16 0h1m15 0h1m16 0h1m16 0h1m15 0h1m16 0h1m15 0h1m16 0h1m16 0h1m15 0h1m16 0h1m15 0h1m16 0h1m15 0h1m16 0h1m16 0h1m15 0h1m16 0h1m15 0h1m16 0h1m16 0h1m15 0h1m16 0h1m15 0h1m16 0h1m16 0h1m15 0h1m16 0h1m15 0h1m16 0h1m16 0h1m15 0h1m16 0h1m15 0h1m16 0h1m15 0h1m16 0h1m16 0h1M38 934.5h1m16 0h1m15 0h1m16 0h1m16 0h1m15 0h1m16 0h1m15 0h1m16 0h1m15 0h1m16 0h1m16 0h1m15 0h1m16 0h1m15 0h1m16 0h1m16 0h1m15 0h1m16 0h1m15 0h1m16 0h1m16 0h1m15 0h1m16 0h1m15 0h1m16 0h1m16 0h1m15 0h1m16 0h1m15 0h1m16 0h1m15 0h1m16 0h1m16 0h1m15 0h1m16 0h1m15 0h1m16 0h1m16 0h1m15 0h1m16 0h1m15 0h1m16 0h1m16 0h1m15 0h1m16 0h1m15 0h1m16 0h1m15 0h1m16 0h1m16 0h1m15 0h1m16 0h1m15 0h1m16 0h1m16 0h1m15 0h1m16 0h1m15 0h1m16 0h1m16 0h1m15 0h1m16 0h1m15 0h1m16 0h1m16 0h1m15 0h1m16 0h1m15 0h1m16 0h1m15 0h1m16 0h1m16 0h1" stroke="#a0a0a0" stroke-width="1" stroke-linecap="butt"/>
<path d="M39 470L72 470" stroke="#96e07a" stroke-width="2" fill="none"/>
<path d="M304 395L304 38" stroke="#4a8cb4" stroke-width="4" fill="none"/>
<path d="M304 96L337 63L636 63" stroke="#4a8cb4" stroke-width="4" fill="none"/>
<path d="M238 71L271 71" stroke="#96e07a" stroke-width="2" fill="none"/>
<path d="M271 71L304 38" stroke="#96e07a" stroke-width="2" fill="none"/>
<path d="M238 171L271 171" stroke="#96e07a" stroke-width="2" fill="none"/>
<path d="M271 171L304 138" stroke="#96e07a" stroke-width="2" fill="none"/>
<path d="M238 204L271 204" stroke="#96e07a" stroke-width="2" fill="none"/>
<path d="M271 204L304 171" stroke="#96e07a" stroke-width="2" fill="none"/>
<path d="M238 237L271 237" stroke="#96e07a" stroke-width="2" fill="none"/>
<path d="M271 237L304 204" stroke="#96e07a" stroke-width="2" fill="none"/>
<path d="M238 270L271 270" stroke="#96e07a" stroke-width="2" fill="none"/>
<path d="M271 270L304 237" stroke="#96e07a" stroke-width="2" fill="none"/>
<path d="M230 337L271 337" stroke="#96e07a" stroke-width="2" fill="none"/>
<path d="M271 337L304 304" stroke="#96e07a" stroke-width="2" fill="none"/>
<path d="M238 378L271 378" stroke="#96e07a" stroke-width="2" fill="none"/>
<path d="M271 378L304 345" stroke="#96e07a" stroke-width="2" fill="none"/>
<path d="M230 337L230 528L30 528" stroke="#96e07a" stroke-width="2" fill="none"/>
<path d="M238 378L238 569L30 569" stroke="#96e07a" stroke-width="2" fill="none"/>
<path d="M238 105L536 105L536 436L835 436" stroke="#96e07a" stroke-width="2" fill="none"/>
<path d="M238 138L321 138L321 652L520 652" stroke="#96e07a" stroke-width="2" fill="none"/>
<path d="M1100 71L1134 71L1134 403L1266 403" stroke="#96e07a" stroke-width="2" fill="none"/>
<path d="M1167 38L1167 287L1266 287" stroke="#96e07a" stroke-width="2" fill="none"/>
<path d="M1183 38L1183 171L1266 171" stroke="#96e07a" stroke-width="2" fill="none"/>
<path d="M752 304L968 304L968 320" stroke="#96e07a" stroke-width="2" fill="none"/>
<path d="M968 420L968 436" stroke="#96e07a" stroke-width="2" fill="none"/>
<path d="M935 436L1150 436L1150 702L1001 702" stroke="#96e07a" stroke-width="2" fill="none"/>
<path d="M470 519L669 519L669 552" stroke="#96e07a" stroke-width="2" fill="none"/>
<path d="M619 652L669 652" stroke="#96e07a" stroke-width="2" fill="none"/>
<path d="M636 652L636 868L1018 868L1018 768L1001 768" stroke="#96e07a" stroke-width="2" fill="none"/>
<path d="M686 735L802 735" stroke="#96e07a" stroke-width="2" fill="none"/>
<path d="M686 768L802 768" stroke="#96e07a" stroke-width="2" fill="none"/>
<path d="M1001 735L1200 735L1200 801" stroke="#96e07a" stroke-width="2" fill="none"/>
<rect x="-100" y="-100" width="305.5" height="535.5" fill="#4f3a55" stroke="#c8646e" stroke-width="3" stroke-linejoin="miter"/>
<path d="M207 71L238 71" stroke="#c8646e" stroke-width="2"/>
<path d="M152.42 78.75L152.42 62.27L158.66 62.27L160.61 63.05L161.39 63.84L162.17 65.41L162.17 67.76L161.39 69.33L160.61 70.11L158.66 70.9L152.42 70.9M168.8 78.75L168.8 62.27L173.09 62.27L175.43 63.05L177.15 64.62L178.4 66.58L178.94 68.94L178.94 72.08L178.4 74.43L177.15 76.39L175.43 77.97L173.09 78.75L168.8 78.75M185.34 65.8L187.29 64.62L190.02 62.27L190.02 78.75M185.34 78.75L194.7 78.75" stroke="#6aa19d" stroke-width="1.75"/>
<path d="M216.72 50.46L226.08 50.46L221.01 56.74L223.35 56.74L224.91 57.53L225.69 58.31L226.47 60.67L226.47 62.24L225.69 64.59L224.52 66.16L222.57 66.95L219.84 66.95L217.89 66.16L217.11 65.38L216.33 63.81" stroke="#c8646e" stroke-width="1.75"/>
<path d="M241.8 55.96L249.6 66.95M249.6 55.96L241.8 66.95M255.84 54L257.79 52.82L260.52 50.46L260.52 66.95M255.84 66.95L265.2 66.95" stroke="#4690be" stroke-width="1.75"/>
<path d="M207 105L238 105" stroke="#c8646e" stroke-width="2"/>
<path d="M152.42 111.93L152.42 95.45L158.66 95.45L160.61 96.23L161.39 97.02L162.17 98.59L162.17 100.94L161.39 102.51L160.61 103.3L158.66 104.08L152.42 104.08M168.8 111.93L168.8 95.45L173.09 95.45L175.43 96.23L177.15 97.8L178.4 99.76L178.94 102.12L178.94 105.26L178.4 107.61L177.15 109.58L175.43 111.15L173.09 111.93L168.8 111.93M184.95 98.59L185.73 97.02L186.51 96.23L188.07 95.45L191.19 95.45L192.75 96.23L193.53 97.02L194.31 98.59L194.31 100.16L193.53 102.51L191.97 104.47L184.95 111.93L194.7 111.93" stroke="#6aa19d" stroke-width="1.75"/>
<path d="M223.94 83.64L216.13 95.03L226.66 95.03M223.94 83.64L223.94 100.13" stroke="#c8646e" stroke-width="1.75"/>
<path d="M207 138L238 138" stroke="#c8646e" stroke-width="2"/>
<path d="M152.42 145.11L152.42 128.62L158.66 128.62L160.61 129.41L161.39 130.19L162.17 131.76L162.17 134.12L161.39 135.69L160.61 136.47L158.66 137.26L152.42 137.26M168.8 145.11L168.8 128.62L173.09 128.62L175.43 129.41L177.15 130.98L178.4 132.94L178.94 135.3L178.94 138.44L178.4 140.79L177.15 142.75L175.43 144.32L173.09 145.11L168.8 145.11M184.95 128.62L194.31 128.62L189.24 134.9L191.58 134.9L193.14 135.69L193.92 136.47L194.7 138.83L194.7 140.4L193.92 142.75L192.75 144.32L190.8 145.11L188.07 145.11L186.12 144.32L185.34 143.54L184.56 141.97" stroke="#6aa19d" stroke-width="1.75"/>
<path d="M225.3 116.82L217.5 116.82L216.72 123.89L217.5 123.1L219.84 122.32L222.18 122.32L224.52 123.1L225.69 124.67L226.47 127.03L226.47 128.6L225.69 130.95L224.52 132.52L222.18 133.31L219.84 133.31L217.89 132.52L217.11 131.74L216.33 130.17" stroke="#c8646e" stroke-width="1.75"/>
<path d="M207 171L238 171" stroke="#c8646e" stroke-width="2"/>
<path d="M152.03 178.29L152.03 161.81L158.27 161.81L160.22 162.59L161 163.38L161.78 164.94L161.78 167.3L161 168.87L160.22 169.66L158.27 170.44L152.03 170.44M168.41 178.29L168.41 161.81L172.7 161.81L175.04 162.59L176.76 164.16L178.01 166.12L178.55 168.48L178.55 171.62L178.01 173.97L176.76 175.94L175.04 177.5L172.7 178.29L168.41 178.29M191.97 161.81L184.17 173.19L194.7 173.19M191.97 161.81L191.97 178.29" stroke="#6aa19d" stroke-width="1.75"/>
<path d="M216.53 161.39L217.07 159.27L218.48 157.7L220.43 157.07L221.99 157.07L223.94 157.7L225.5 159.27L226.28 161.39L226.28 162.17L225.5 164.29L223.94 165.86L221.99 166.49L220.43 166.49L218.48 165.86L217.07 164.29L216.53 162.17L216.53 158.64L217.31 155.5L218.87 152.36L220.82 150L224.33 150" stroke="#c8646e" stroke-width="1.75"/>
<path d="M241.8 155.5L249.6 166.49M249.6 155.5L241.8 166.49M255.45 150L264.81 150L259.74 156.28L262.08 156.28L263.64 157.07L264.42 157.85L265.2 160.21L265.2 161.78L264.42 164.13L263.25 165.7L261.3 166.49L258.57 166.49L256.62 165.7L255.84 164.92L255.06 163.35" stroke="#4690be" stroke-width="1.75"/>
<path d="M207 204L238 204" stroke="#c8646e" stroke-width="2"/>
<path d="M152.42 211.47L152.42 194.99L158.66 194.99L160.61 195.77L161.39 196.56L162.17 198.12L162.17 200.48L161.39 202.05L160.61 202.84L158.66 203.62L152.42 203.62M168.8 211.47L168.8 194.99L173.09 194.99L175.43 195.77L177.15 197.34L178.4 199.3L178.94 201.66L178.94 204.8L178.4 207.15L177.15 209.12L175.43 210.69L173.09 211.47L168.8 211.47M193.53 194.99L185.73 194.99L184.95 202.05L185.73 201.26L188.07 200.48L190.41 200.48L192.75 201.26L193.92 202.84L194.7 205.19L194.7 206.76L193.92 209.12L192.75 210.69L190.41 211.47L188.07 211.47L186.12 210.69L185.34 209.9L184.56 208.33" stroke="#6aa19d" stroke-width="1.75"/>
<path d="M208.8 186.72L210.75 185.54L213.48 183.19L213.48 199.67M208.8 199.67L218.16 199.67M224.64 186.72L226.59 185.54L229.32 183.19L229.32 199.67M224.64 199.67L234 199.67" stroke="#c8646e" stroke-width="1.75"/>
<path d="M249.6 190.64L248.82 189.46L246.87 188.68L244.53 188.68L242.58 189.46L241.8 191.03L242.58 192.6L244.14 193.39L247.26 194.17L248.82 194.96L249.6 196.53L249.6 197.31L248.82 198.88L246.87 199.67L244.53 199.67L242.58 198.88L241.8 197.71M263.64 191.03L262.08 189.46L260.52 188.68L258.57 188.68L257.01 189.46L255.84 191.03L255.06 193.39L255.06 194.96L255.84 197.31L257.01 198.88L258.57 199.67L260.52 199.67L262.08 198.88L263.64 197.31" stroke="#4690be" stroke-width="1.75"/>
<path d="M207 237L238 237" stroke="#c8646e" stroke-width="2"/>
<path d="M152.03 244.65L152.03 228.17L158.27 228.17L160.22 228.95L161 229.74L161.78 231.31L161.78 233.66L161 235.23L160.22 236.02L158.27 236.8L152.03 236.8M168.41 244.65L168.41 228.17L172.7 228.17L175.04 228.95L176.76 230.52L178.01 232.48L178.55 234.84L178.55 237.98L178.01 240.33L176.76 242.3L175.04 243.87L172.7 244.65L168.41 244.65M184.95 239.55L185.5 237.43L186.9 235.86L188.85 235.23L190.41 235.23L192.36 235.86L193.92 237.43L194.7 239.55L194.7 240.33L193.92 242.45L192.36 244.02L190.41 244.65L188.85 244.65L186.9 244.02L185.5 242.45L184.95 240.33L184.95 236.8L185.73 233.66L187.29 230.52L189.24 228.17L192.75 228.17" stroke="#6aa19d" stroke-width="1.75"/>
<path d="M208.8 219.9L210.75 218.72L213.48 216.37L213.48 232.85M208.8 232.85L218.16 232.85M224.25 219.5L225.03 217.94L225.81 217.15L227.37 216.37L230.49 216.37L232.05 217.15L232.83 217.94L233.61 219.5L233.61 221.07L232.83 223.43L231.27 225.39L224.25 232.85L234 232.85" stroke="#c8646e" stroke-width="1.75"/>
<path d="M249.6 223.82L248.82 222.64L246.87 221.86L244.53 221.86L242.58 222.64L241.8 224.22L242.58 225.78L244.14 226.57L247.26 227.35L248.82 228.14L249.6 229.71L249.6 230.5L248.82 232.06L246.87 232.85L244.53 232.85L242.58 232.06L241.8 230.89M255.45 216.37L255.45 230.5L255.84 232.06L257.01 232.85L258.18 232.85" stroke="#4690be" stroke-width="1.75"/>
<path d="M207 270L238 270" stroke="#c8646e" stroke-width="2"/>
<path d="M152.42 277.83L152.42 261.34L158.66 261.34L160.61 262.13L161.39 262.91L162.17 264.48L162.17 266.84L161.39 268.41L160.61 269.19L158.66 269.98L152.42 269.98M168.8 277.83L168.8 261.34L173.09 261.34L175.43 262.13L177.15 263.7L178.4 265.66L178.94 268.02L178.94 271.16L178.4 273.51L177.15 275.47L175.43 277.04L173.09 277.83L168.8 277.83M184.56 261.34L194.7 261.34L188.07 277.83" stroke="#6aa19d" stroke-width="1.75"/>
<path d="M208.8 253.08L210.75 251.9L213.48 249.54L213.48 266.03M208.8 266.03L218.16 266.03M224.25 249.54L233.61 249.54L228.54 255.82L230.88 255.82L232.44 256.61L233.22 257.39L234 259.75L234 261.32L233.22 263.67L232.05 265.24L230.1 266.03L227.37 266.03L225.42 265.24L224.64 264.46L223.86 262.89" stroke="#c8646e" stroke-width="1.75"/>
<path d="M249.6 257L248.82 255.82L246.87 255.04L244.53 255.04L242.58 255.82L241.8 257.39L242.58 258.96L244.14 259.75L247.26 260.53L248.82 261.32L249.6 262.89L249.6 263.67L248.82 265.24L246.87 266.03L244.53 266.03L242.58 265.24L241.8 264.07M258.57 255.04L257.01 255.82L255.84 257.39L255.06 259.75L255.06 261.32L255.84 263.67L257.01 265.24L258.57 266.03L260.91 266.03L262.47 265.24L263.64 263.67L264.42 261.32L264.42 259.75L263.64 257.39L262.47 255.82L260.91 255.04L258.57 255.04M269.88 259.75L279.24 259.75L279.24 258.18L278.46 256.61L277.45 255.67L275.73 255.04L273.55 255.04L271.83 255.82L270.66 257.39L269.88 259.75L269.88 261.32L270.66 263.67L271.83 265.24L273.55 266.03L275.73 266.03L277.45 265.24L279.01 263.67" stroke="#4690be" stroke-width="1.75"/>
<path d="M242.58 321.4L246.87 332.39M251.16 321.4L246.87 332.39L245.31 335.53L244.14 337.1L242.97 337.88L241.8 337.88M256.23 319.04L257.01 317.47L257.79 316.69L259.35 315.9L262.47 315.9L264.03 316.69L264.81 317.47L265.59 319.04L265.59 320.62L264.81 322.97L263.25 324.93L256.23 332.39L265.98 332.39" stroke="#4690be" stroke-width="1.75"/>
<path d="M242.58 362.88L246.87 373.87M251.16 362.88L246.87 373.87L245.31 377L244.14 378.57L242.97 379.36L241.8 379.36M264.81 357.38L257.01 357.38L256.23 364.44L257.01 363.66L259.35 362.88L261.69 362.88L264.03 363.66L265.2 365.23L265.98 367.59L265.98 369.16L265.2 371.51L264.03 373.08L261.69 373.87L259.35 373.87L257.4 373.08L256.62 372.3L255.84 370.73" stroke="#4690be" stroke-width="1.75"/>
<path d="M79.7 426.6L63.22 421.14L79.7 415.68M74.2 424.65L74.2 417.63M65.57 400.86L64.39 402.03L63.22 403.98L63.22 406.32L64 408.27L65.57 409.83L67.53 410.61L69.89 411L73.03 411L75.38 410.61L77.34 409.83L78.92 408.27L79.7 406.32L79.7 403.98L78.92 402.03L77.34 400.86L72.64 400.86L72.64 404.37M79.7 393.84L63.22 393.84L79.7 384.01L63.22 384.01M79.7 377.07L63.22 377.07L63.22 372.78L64 370.44L65.57 368.72L67.53 367.48L69.89 366.93L73.03 366.93L75.38 367.48L77.34 368.72L78.92 370.44L79.7 372.78L79.7 377.07" stroke="#6aa19d" stroke-width="1.75"/>
<path d="M32.47 415.86L31.29 417.03L30.12 418.98L30.12 421.32L30.9 423.27L32.47 424.83L34.43 425.61L36.79 426L39.93 426L42.28 425.61L44.25 424.83L45.82 423.27L46.6 421.32L46.6 418.98L45.82 417.03L44.25 415.86L39.54 415.86L39.54 419.37M46.6 408.84L30.12 408.84L46.6 399.01L30.12 399.01M46.6 392.07L30.12 392.07L30.12 387.78L30.9 385.44L32.47 383.72L34.43 382.48L36.79 381.93L39.93 381.93L42.28 382.48L44.25 383.72L45.82 385.44L46.6 387.78L46.6 392.07" stroke="#6aa19d" stroke-width="1.75"/>
<path d="M72 437L72 470" stroke="#c8646e" stroke-width="2"/>
<path d="M39 437L39 486" stroke="#c8646e" stroke-width="2"/>
<path d="M55.16 465.79L53.59 465.01L52.8 464.23L52.02 462.67L52.02 459.55L52.8 457.99L53.59 457.21L55.16 456.43L56.73 456.43L59.08 457.21L61.04 458.77L68.5 465.79L68.5 456.04M55.16 449.96L53.59 449.18L52.8 448.4L52.02 446.84L52.02 443.72L52.8 442.16L53.59 441.38L55.16 440.6L56.73 440.6L59.08 441.38L61.04 442.94L68.5 449.96L68.5 440.21" stroke="#c8646e" stroke-width="1.75"/>
<path d="M22.41 486L55.59 486L39 503Z" stroke="#c8646e" stroke-width="2" fill="none"/>
<path d="M28.73 521.43L27.56 520.25L25.61 519.07L23.27 519.07L21.32 519.86L19.76 521.43L18.98 523.39L18.59 525.75L18.59 528.89L18.98 531.24L19.76 533.2L21.32 534.77L23.27 535.56L25.61 535.56L27.56 534.77L28.73 533.2L28.73 528.49L25.22 528.49M35.75 535.56L35.75 519.07L45.57 535.56L45.57 519.07M52.52 535.56L52.52 519.07L56.81 519.07L59.15 519.86L60.86 521.43L62.11 523.39L62.66 525.75L62.66 528.89L62.11 531.24L60.86 533.2L59.15 534.77L56.81 535.56L52.52 535.56" stroke="#6aa19d" stroke-width="1.75"/>
<path d="M45.98 472.89L41.89 476.98L36.11 476.98L32.02 472.89L32.02 467.11L36.11 463.02L41.89 463.02L45.98 467.11Z" fill="#8cd470"/>
<rect x="868.5" y="-100" width="199" height="270.5" fill="#4f3a55" stroke="#c8646e" stroke-width="3" stroke-linejoin="miter"/>
<path d="M1069 71L1100 71" stroke="#c8646e" stroke-width="2"/>
<path d="M1069 138L1100 138" stroke="#c8646e" stroke-width="2"/>
<path d="M1091 129.7L1107.6 146.3M1091 146.3L1107.6 129.7" stroke="#9fe0e2" stroke-width="2"/>
<path d="M1031.82 62.27L1030.26 63.05L1028.7 64.62L1027.92 66.19L1027.53 68.55L1027.53 72.47L1027.92 74.83L1028.7 76.39L1030.26 77.97L1031.82 78.75L1034.55 78.75L1036.11 77.97L1037.67 76.39L1038.45 74.83L1038.84 72.47L1038.84 68.55L1038.45 66.19L1037.67 64.62L1036.11 63.05L1034.55 62.27L1031.82 62.27M1029.48 76L1031.04 74.83L1032.6 74.83L1034.16 76L1037.28 79.53L1040.01 80.71M1045.86 62.27L1045.86 78.75M1056 62.27L1056 78.75M1045.86 70.11L1056 70.11" stroke="#6aa19d" stroke-width="1.75"/>
<path d="M1025.11 128.62L1023.55 129.41L1021.99 130.98L1021.21 132.55L1020.82 134.9L1020.82 138.83L1021.21 141.18L1021.99 142.75L1023.55 144.32L1025.11 145.11L1027.84 145.11L1029.4 144.32L1030.96 142.75L1031.74 141.18L1032.13 138.83L1032.13 134.9L1031.74 132.55L1030.96 130.98L1029.4 129.41L1027.84 128.62L1025.11 128.62M1022.77 142.36L1024.33 141.18L1025.89 141.18L1027.45 142.36L1030.57 145.89L1033.3 147.07M1039.15 128.62L1039.15 145.11M1049.29 128.62L1049.29 145.11M1039.15 136.47L1049.29 136.47M1056.7 128.62L1055.92 131.76" stroke="#6aa19d" stroke-width="1.75"/>
<path d="M1078.93 50.46L1089.07 50.46L1082.44 66.95" stroke="#c8646e" stroke-width="1.75"/>
<path d="M1088.88 121.93L1088.33 124.05L1086.93 125.62L1084.98 126.24L1083.42 126.24L1081.47 125.62L1079.91 124.05L1079.12 121.93L1079.12 121.14L1079.91 119.02L1081.47 117.45L1083.42 116.82L1084.98 116.82L1086.93 117.45L1088.33 119.02L1088.88 121.14L1088.88 124.67L1088.1 127.81L1086.54 130.95L1084.59 133.31L1081.08 133.31" stroke="#c8646e" stroke-width="1.75"/>
<path d="M961.47 149.66L960.29 150.83L959.12 152.78L959.12 155.12L959.9 157.07L961.47 158.63L963.43 159.41L965.79 159.8L968.93 159.8L971.28 159.41L973.25 158.63L974.82 157.07L975.6 155.12L975.6 152.78L974.82 150.83L973.25 149.66L968.53 149.66L968.53 153.17M975.6 142.64L959.12 142.64L975.6 132.81L959.12 132.81M975.6 125.87L959.12 125.87L959.12 121.58L959.9 119.24L961.47 117.52L963.43 116.28L965.79 115.73L968.93 115.73L971.28 116.28L973.25 117.52L974.82 119.24L975.6 121.58L975.6 125.87" stroke="#6aa19d" stroke-width="1.75"/>
<path d="M947.51 188.77L948.3 190.72L949.87 191.5L951.44 191.5L953.01 190.72L954.19 189.16L954.97 186.04L956.15 184.09L957.72 182.92L959.29 182.53L960.86 182.53L962.43 183.31L963.22 184.09L964 186.04L964 189.16L963.22 191.11L962.43 191.89L960.86 192.67L959.29 192.67L957.72 192.28L956.15 191.11L954.97 189.16L954.19 186.04L953.01 184.48L951.44 183.7L949.87 183.7L948.3 184.48L947.51 186.43L947.51 188.77" stroke="#c8646e" stroke-width="1.75"/>
<path d="M968 172L968 204" stroke="#c8646e" stroke-width="2"/>
<path d="M968 204L968 221" stroke="#c8646e" stroke-width="2"/>
<path d="M951.41 221L984.59 221L968 237Z" stroke="#c8646e" stroke-width="2" fill="none"/>
<path d="M957.76 255.99L956.6 254.81L954.64 253.63L952.3 253.63L950.36 254.42L948.79 255.99L948.01 257.95L947.62 260.31L947.62 263.45L948.01 265.8L948.79 267.76L950.36 269.33L952.3 270.12L954.64 270.12L956.6 269.33L957.76 267.76L957.76 263.06L954.25 263.06M964.78 270.12L964.78 253.63L974.61 270.12L974.61 253.63M981.55 270.12L981.55 253.63L985.85 253.63L988.18 254.42L989.9 255.99L991.15 257.95L991.7 260.31L991.7 263.45L991.15 265.8L989.9 267.76L988.18 269.33L985.85 270.12L981.55 270.12" stroke="#6aa19d" stroke-width="1.75"/>
<path d="M752 304L752 345.37" stroke="#c8646e" stroke-width="2"/>
<path d="M752 395.17L752 436" stroke="#c8646e" stroke-width="2"/>
<path d="M719 345.37L785 345.37" stroke="#c8646e" stroke-width="2"/>
<path d="M752 345.37L785 395.17L719 395.17Z" stroke="#c8646e" stroke-width="1" fill="#c8646e"/>
<path d="M734.75 333.37L733.19 332.59L732.4 331.81L731.62 330.25L731.62 327.13L732.4 325.57L733.19 324.79L734.75 324.01L736.33 324.01L738.68 324.79L740.64 326.35L748.1 333.37L748.1 323.62" stroke="#c8646e" stroke-width="1.75"/>
<path d="M735.15 416.12L733.97 414.17L731.62 411.44L748.1 411.44M748.1 416.12L748.1 406.76" stroke="#c8646e" stroke-width="1.75"/>
<path d="M752 436L752 478.09" stroke="#c8646e" stroke-width="2"/>
<path d="M752 527.89L752 569" stroke="#c8646e" stroke-width="2"/>
<path d="M719 478.09L785 478.09" stroke="#c8646e" stroke-width="2"/>
<path d="M752 478.09L785 527.89L719 527.89Z" stroke="#c8646e" stroke-width="1" fill="#c8646e"/>
<path d="M734.75 466.09L733.19 465.31L732.4 464.53L731.62 462.97L731.62 459.85L732.4 458.29L733.19 457.51L734.75 456.73L736.33 456.73L738.68 457.51L740.64 459.07L748.1 466.09L748.1 456.34" stroke="#c8646e" stroke-width="1.75"/>
<path d="M735.15 548.84L733.97 546.89L731.62 544.16L748.1 544.16M748.1 548.84L748.1 539.49" stroke="#c8646e" stroke-width="1.75"/>
<path d="M752 304L752 270" stroke="#c8646e" stroke-width="2"/>
<path d="M742 287L752 270L762 287" stroke="#c8646e" stroke-width="2" fill="none"/>
<path d="M752 569L752 586" stroke="#c8646e" stroke-width="2"/>
<path d="M735.41 586L768.59 586L752 602Z" stroke="#c8646e" stroke-width="2" fill="none"/>
<path d="M968 320L968 337" stroke="#c8646e" stroke-width="2"/>
<path d="M968 403L968 420" stroke="#c8646e" stroke-width="2"/>
<rect x="954.73" y="336.09" width="26.54" height="66.16" fill="none" stroke="#c8646e" stroke-width="3" stroke-linejoin="miter"/>
<path d="M835 436L852.9 436" stroke="#c8646e" stroke-width="2"/>
<path d="M918.5 436L935 436" stroke="#c8646e" stroke-width="2"/>
<rect x="852.9" y="423.03" width="65.6" height="25.94" fill="none" stroke="#c8646e" stroke-width="3" stroke-linejoin="miter"/>
<path d="M758.98 306.89L754.89 310.98L749.11 310.98L745.02 306.89L745.02 301.11L749.11 297.02L754.89 297.02L758.98 301.11Z" fill="#8cd470"/>
<path d="M758.98 438.89L754.89 442.98L749.11 442.98L745.02 438.89L745.02 433.11L749.11 429.02L754.89 429.02L758.98 433.11Z" fill="#8cd470"/>
<path d="M974.98 438.89L970.89 442.98L965.11 442.98L961.02 438.89L961.02 433.11L965.11 429.02L970.89 429.02L974.98 433.11Z" fill="#8cd470"/>
<path d="M742.04 253.81L742.04 240.46M735.8 247.13L748.28 247.13M763.88 237.71L756.08 237.71L755.3 244.78L756.08 243.99L758.42 243.21L760.76 243.21L763.1 243.99L764.27 245.56L765.05 247.92L765.05 249.49L764.27 251.84L763.1 253.41L760.76 254.2L758.42 254.2L756.47 253.41L755.69 252.63L754.91 251.06M769.57 237.71L775.03 254.2L780.49 237.71" stroke="#6aa19d" stroke-width="1.75"/>
<path d="M799.8 360.5L799.8 344.01L804.09 344.01L806.43 344.8L808.15 346.37L809.39 348.33L809.94 350.69L809.94 353.83L809.39 356.18L808.15 358.14L806.43 359.71L804.09 360.5L799.8 360.5M815.95 344.01L825.31 344.01L820.24 350.3L822.58 350.3L824.14 351.08L824.92 351.87L825.7 354.22L825.7 355.79L824.92 358.14L823.75 359.71L821.8 360.5L819.07 360.5L817.12 359.71L816.34 358.93L815.56 357.36" stroke="#b285ec" stroke-width="1.75"/>
<path d="M798.9 378.15L800.85 376.97L803.58 374.62L803.58 391.1M798.9 391.1L808.26 391.1M815.12 391.1L815.12 374.62L824.95 391.1L824.95 374.62M838.91 374.62L831.11 386L841.64 386M838.91 374.62L838.91 391.1M847.73 378.15L849.68 376.97L852.41 374.62L852.41 391.1M847.73 391.1L857.09 391.1M870.58 374.62L862.78 386L873.31 386M870.58 374.62L870.58 391.1M882.52 374.62L880.57 375.4L879.79 376.97L879.79 378.54L880.57 380.11L882.13 381.29L885.25 382.07L887.2 383.25L888.37 384.82L888.76 386.39L888.76 387.96L887.98 389.53L887.2 390.31L885.25 391.1L882.13 391.1L880.18 390.31L879.4 389.53L878.62 387.96L878.62 386.39L879.01 384.82L880.18 383.25L882.13 382.07L885.25 381.29L886.81 380.11L887.59 378.54L887.59 376.97L886.81 375.4L884.86 374.62L882.52 374.62" stroke="#6aa19d" stroke-width="1.75"/>
<path d="M799.4 494.2L799.4 477.71L803.69 477.71L806.03 478.5L807.75 480.07L808.99 482.03L809.54 484.39L809.54 487.53L808.99 489.88L807.75 491.84L806.03 493.41L803.69 494.2L799.4 494.2M822.96 477.71L815.16 489.1L825.69 489.1M822.96 477.71L822.96 494.2" stroke="#b285ec" stroke-width="1.75"/>
<path d="M798.7 510.95L800.65 509.77L803.38 507.41L803.38 523.9M798.7 523.9L808.06 523.9M814.92 523.9L814.92 507.41L824.75 523.9L824.75 507.41M838.71 507.41L830.91 518.8L841.44 518.8M838.71 507.41L838.71 523.9M847.53 510.95L849.48 509.77L852.21 507.41L852.21 523.9M847.53 523.9L856.89 523.9M870.38 507.41L862.58 518.8L873.11 518.8M870.38 507.41L870.38 523.9M882.32 507.41L880.37 508.2L879.59 509.77L879.59 511.34L880.37 512.91L881.93 514.09L885.05 514.87L887 516.05L888.17 517.62L888.56 519.19L888.56 520.76L887.78 522.33L887 523.12L885.05 523.9L881.93 523.9L879.98 523.12L879.2 522.33L878.42 520.76L878.42 519.19L878.81 517.62L879.98 516.05L881.93 514.87L885.05 514.09L886.61 512.91L887.39 511.34L887.39 509.77L886.61 508.2L884.66 507.41L882.32 507.41" stroke="#6aa19d" stroke-width="1.75"/>
<path d="M894.3 397.65L895.08 396.08L895.86 395.3L897.42 394.51L900.54 394.51L902.1 395.3L902.88 396.08L903.66 397.65L903.66 399.23L902.88 401.58L901.32 403.54L894.3 411L904.05 411M910.91 409.43L910.13 410.21L910.91 411L911.69 410.21L910.91 409.43M917.93 397.65L918.71 396.08L919.49 395.3L921.05 394.51L924.17 394.51L925.73 395.3L926.51 396.08L927.29 397.65L927.29 399.23L926.51 401.58L924.95 403.54L917.93 411L927.68 411M934.16 394.51L934.16 411M941.18 400.01L934.16 407.07M936.89 404.33L941.57 411" stroke="#6aa19d" stroke-width="1.75"/>
<path d="M872.6 477L872.6 460.51L878.84 460.51L880.79 461.3L881.57 462.08L882.35 463.65L882.35 465.23L881.57 466.8L880.79 467.58L878.84 468.37L872.6 468.37M877.67 468.37L882.35 477M897.17 460.51L889.37 460.51L888.59 467.58L889.37 466.8L891.71 466.01L894.05 466.01L896.39 466.8L897.56 468.37L898.34 470.72L898.34 472.29L897.56 474.64L896.39 476.21L894.05 477L891.71 477L889.76 476.21L888.98 475.43L888.2 473.86" stroke="#b285ec" stroke-width="1.75"/>
<path d="M995 362.4L995 345.91L1001.24 345.91L1003.19 346.7L1003.97 347.48L1004.75 349.05L1004.75 350.62L1003.97 352.19L1003.19 352.98L1001.24 353.76L995 353.76M1000.07 353.76L1004.75 362.4M1010.6 345.91L1020.74 345.91L1014.11 362.4" stroke="#b285ec" stroke-width="1.75"/>
<path d="M995 379.85L996.95 378.67L999.68 376.31L999.68 392.8M995 392.8L1004.36 392.8M1014.34 376.31L1012.78 377.1L1011.22 379.45L1010.44 383.38L1010.44 385.74L1011.22 389.66L1012.78 392.01L1014.34 392.8L1015.9 392.8L1017.46 392.01L1019.02 389.66L1019.8 385.74L1019.8 383.38L1019.02 379.45L1017.46 377.1L1015.9 376.31L1014.34 376.31M1026.67 376.31L1026.67 392.8M1036.42 376.31L1026.67 386.13M1030.18 382.6L1036.42 392.8" stroke="#6aa19d" stroke-width="1.75"/>
<path d="M742.09 620.97L740.92 619.79L738.97 618.61L736.63 618.61L734.68 619.4L733.12 620.97L732.34 622.93L731.95 625.29L731.95 628.43L732.34 630.78L733.12 632.74L734.68 634.31L736.63 635.1L738.97 635.1L740.92 634.31L742.09 632.74L742.09 628.03L738.58 628.03M749.11 635.1L749.11 618.61L758.94 635.1L758.94 618.61M765.88 635.1L765.88 618.61L770.17 618.61L772.51 619.4L774.23 620.97L775.48 622.93L776.02 625.29L776.02 628.43L775.48 630.78L774.23 632.74L772.51 634.31L770.17 635.1L765.88 635.1" stroke="#6aa19d" stroke-width="1.75"/>
<path d="M895.56 604.31L895.56 616.88L895.01 618.84L893.61 620.17L892.05 620.8L890.1 620.8M901.96 604.31L911.32 604.31L906.25 610.59L908.59 610.59L910.15 611.38L910.93 612.16L911.71 614.52L911.71 616.09L910.93 618.44L909.76 620.01L907.81 620.8L905.08 620.8L903.13 620.01L902.35 619.23L901.57 617.66" stroke="#b285ec" stroke-width="1.75"/>
<path d="M470 519L470 561.04" stroke="#c8646e" stroke-width="2"/>
<path d="M470 610.84L470 652" stroke="#c8646e" stroke-width="2"/>
<path d="M437 561.04L503 561.04" stroke="#c8646e" stroke-width="2"/>
<path d="M470 561.04L503 610.84L437 610.84Z" stroke="#c8646e" stroke-width="1" fill="#c8646e"/>
<path d="M452.75 549.04L451.19 548.26L450.4 547.48L449.62 545.92L449.62 542.8L450.4 541.24L451.19 540.46L452.75 539.68L454.33 539.68L456.68 540.46L458.64 542.02L466.1 549.04L466.1 539.29" stroke="#c8646e" stroke-width="1.75"/>
<path d="M453.15 631.79L451.97 629.85L449.62 627.12L466.1 627.12M466.1 631.79L466.1 622.44" stroke="#c8646e" stroke-width="1.75"/>
<path d="M470 652L470 693.76" stroke="#c8646e" stroke-width="2"/>
<path d="M470 743.56L470 785" stroke="#c8646e" stroke-width="2"/>
<path d="M437 693.76L503 693.76" stroke="#c8646e" stroke-width="2"/>
<path d="M470 693.76L503 743.56L437 743.56Z" stroke="#c8646e" stroke-width="1" fill="#c8646e"/>
<path d="M452.75 681.76L451.19 680.98L450.4 680.2L449.62 678.64L449.62 675.52L450.4 673.96L451.19 673.18L452.75 672.4L454.33 672.4L456.68 673.18L458.64 674.74L466.1 681.76L466.1 672.01" stroke="#c8646e" stroke-width="1.75"/>
<path d="M453.15 764.51L451.97 762.57L449.62 759.84L466.1 759.84M466.1 764.51L466.1 755.16" stroke="#c8646e" stroke-width="1.75"/>
<path d="M470 519L470 486" stroke="#c8646e" stroke-width="2"/>
<path d="M460 503L470 486L480 503" stroke="#c8646e" stroke-width="2" fill="none"/>
<path d="M470 785L470 801" stroke="#c8646e" stroke-width="2"/>
<path d="M453.41 801L486.59 801L470 818Z" stroke="#c8646e" stroke-width="2" fill="none"/>
<path d="M669 552L669 569" stroke="#c8646e" stroke-width="2"/>
<path d="M669 635L669 652" stroke="#c8646e" stroke-width="2"/>
<rect x="656.53" y="568.35" width="26.54" height="66.16" fill="none" stroke="#c8646e" stroke-width="3" stroke-linejoin="miter"/>
<path d="M520 652L536.4 652" stroke="#c8646e" stroke-width="2"/>
<path d="M603.8 652L619 652" stroke="#c8646e" stroke-width="2"/>
<rect x="536.4" y="638.43" width="67.4" height="25.94" fill="none" stroke="#c8646e" stroke-width="3" stroke-linejoin="miter"/>
<path d="M476.98 521.89L472.89 525.98L467.11 525.98L463.02 521.89L463.02 516.11L467.11 512.02L472.89 512.02L476.98 516.11Z" fill="#8cd470"/>
<path d="M476.98 654.89L472.89 658.98L467.11 658.98L463.02 654.89L463.02 649.11L467.11 645.02L472.89 645.02L476.98 649.11Z" fill="#8cd470"/>
<path d="M642.98 654.89L638.89 658.98L633.11 658.98L629.02 654.89L629.02 649.11L633.11 645.02L638.89 645.02L642.98 649.11Z" fill="#8cd470"/>
<path d="M460.14 469.51L460.14 456.16M453.9 462.83L466.38 462.83M481.98 453.41L474.18 453.41L473.4 460.48L474.18 459.69L476.52 458.91L478.86 458.91L481.2 459.69L482.37 461.26L483.15 463.62L483.15 465.19L482.37 467.54L481.2 469.11L478.86 469.9L476.52 469.9L474.57 469.11L473.79 468.33L473.01 466.76M487.67 453.41L493.13 469.9L498.59 453.41" stroke="#6aa19d" stroke-width="1.75"/>
<path d="M506.8 545.95L508.75 544.77L511.48 542.41L511.48 558.9M506.8 558.9L516.16 558.9M523.02 558.9L523.02 542.41L532.85 558.9L532.85 542.41M546.81 542.41L539.01 553.8L549.54 553.8M546.81 542.41L546.81 558.9M555.63 545.95L557.58 544.77L560.31 542.41L560.31 558.9M555.63 558.9L564.99 558.9M578.48 542.41L570.68 553.8L581.21 553.8M578.48 542.41L578.48 558.9M590.42 542.41L588.47 543.2L587.69 544.77L587.69 546.34L588.47 547.91L590.03 549.09L593.15 549.87L595.1 551.05L596.27 552.62L596.66 554.19L596.66 555.76L595.88 557.33L595.1 558.12L593.15 558.9L590.03 558.9L588.08 558.12L587.3 557.33L586.52 555.76L586.52 554.19L586.91 552.62L588.08 551.05L590.03 549.87L593.15 549.09L594.71 547.91L595.49 546.34L595.49 544.77L594.71 543.2L592.76 542.41L590.42 542.41" stroke="#6aa19d" stroke-width="1.75"/>
<path d="M517.4 576.7L517.4 560.22L521.69 560.22L524.03 561L525.75 562.57L526.99 564.53L527.54 566.89L527.54 570.03L526.99 572.38L525.75 574.35L524.03 575.92L521.69 576.7L517.4 576.7M533.94 563.75L535.89 562.57L538.62 560.22L538.62 576.7M533.94 576.7L543.3 576.7" stroke="#b285ec" stroke-width="1.75"/>
<path d="M607.6 594L607.6 577.51L613.84 577.51L615.79 578.3L616.57 579.09L617.35 580.65L617.35 582.23L616.57 583.79L615.79 584.58L613.84 585.37L607.6 585.37M612.67 585.37L617.35 594M623.98 588.9L624.53 586.78L625.93 585.21L627.88 584.58L629.44 584.58L631.39 585.21L632.95 586.78L633.73 588.9L633.73 589.68L632.95 591.8L631.39 593.37L629.44 594L627.88 594L625.93 593.37L624.53 591.8L623.98 589.68L623.98 586.15L624.76 583.01L626.32 579.87L628.27 577.51L631.78 577.51" stroke="#b285ec" stroke-width="1.75"/>
<path d="M606 613.25L607.95 612.07L610.68 609.72L610.68 626.2M606 626.2L615.36 626.2M625.34 609.72L623.78 610.5L622.22 612.86L621.44 616.78L621.44 619.13L622.22 623.06L623.78 625.42L625.34 626.2L626.9 626.2L628.46 625.42L630.02 623.06L630.8 619.13L630.8 616.78L630.02 612.86L628.46 610.5L626.9 609.72L625.34 609.72M637.67 609.72L637.67 626.2M647.42 609.72L637.67 619.53M641.18 616L647.42 626.2" stroke="#6aa19d" stroke-width="1.75"/>
<path d="M546.5 608.65L547.28 607.09L548.06 606.3L549.62 605.51L552.74 605.51L554.3 606.3L555.08 607.09L555.86 608.65L555.86 610.23L555.08 612.58L553.52 614.54L546.5 622L556.25 622M563.11 620.43L562.33 621.22L563.11 622L563.89 621.22L563.11 620.43M570.13 608.65L570.91 607.09L571.69 606.3L573.25 605.51L576.37 605.51L577.93 606.3L578.71 607.09L579.49 608.65L579.49 610.23L578.71 612.58L577.15 614.54L570.13 622L579.88 622M586.36 605.51L586.36 622M593.38 611.01L586.36 618.08M589.09 615.33L593.77 622" stroke="#6aa19d" stroke-width="1.75"/>
<path d="M573.8 692.5L573.8 676.01L580.04 676.01L581.99 676.8L582.77 677.59L583.55 679.15L583.55 680.73L582.77 682.29L581.99 683.08L580.04 683.87L573.8 683.87M578.87 683.87L583.55 692.5M589.79 676.01L599.15 676.01L594.08 682.29L596.42 682.29L597.98 683.08L598.76 683.87L599.54 686.22L599.54 687.79L598.76 690.14L597.59 691.72L595.64 692.5L592.91 692.5L590.96 691.72L590.18 690.93L589.4 689.36" stroke="#b285ec" stroke-width="1.75"/>
<path d="M517.4 709L517.4 692.51L521.69 692.51L524.03 693.3L525.75 694.87L526.99 696.83L527.54 699.19L527.54 702.33L526.99 704.68L525.75 706.64L524.03 708.22L521.69 709L517.4 709M533.55 695.65L534.33 694.09L535.11 693.3L536.67 692.51L539.79 692.51L541.35 693.3L542.13 694.09L542.91 695.65L542.91 697.23L542.13 699.58L540.57 701.54L533.55 709L543.3 709" stroke="#b285ec" stroke-width="1.75"/>
<path d="M516.2 726.85L518.15 725.67L520.88 723.31L520.88 739.8M516.2 739.8L525.56 739.8M532.42 739.8L532.42 723.31L542.25 739.8L542.25 723.31M556.21 723.31L548.41 734.7L558.94 734.7M556.21 723.31L556.21 739.8M565.03 726.85L566.98 725.67L569.71 723.31L569.71 739.8M565.03 739.8L574.39 739.8M587.88 723.31L580.08 734.7L590.61 734.7M587.88 723.31L587.88 739.8M599.82 723.31L597.87 724.1L597.09 725.67L597.09 727.24L597.87 728.81L599.43 729.99L602.55 730.77L604.5 731.95L605.67 733.52L606.06 735.09L606.06 736.66L605.28 738.23L604.5 739.01L602.55 739.8L599.43 739.8L597.48 739.01L596.7 738.23L595.92 736.66L595.92 735.09L596.31 733.52L597.48 731.95L599.43 730.77L602.55 729.99L604.11 728.81L604.89 727.24L604.89 725.67L604.11 724.1L602.16 723.31L599.82 723.31" stroke="#6aa19d" stroke-width="1.75"/>
<path d="M460.06 836.64L458.89 835.46L456.94 834.28L454.61 834.28L452.65 835.07L451.1 836.64L450.31 838.6L449.92 840.96L449.92 844.1L450.31 846.45L451.1 848.41L452.65 849.99L454.61 850.77L456.94 850.77L458.89 849.99L460.06 848.41L460.06 843.7L456.55 843.7M467.09 850.77L467.09 834.28L476.91 850.77L476.91 834.28M483.86 850.77L483.86 834.28L488.14 834.28L490.49 835.07L492.2 836.64L493.45 838.6L494 840.96L494 844.1L493.45 846.45L492.2 848.41L490.49 849.99L488.14 850.77L483.86 850.77" stroke="#6aa19d" stroke-width="1.75"/>
<path d="M914.67 681.86L914.67 669.64L914.67 669.93L919.75 671.18L924.72 672.82L929.54 674.85L934.19 677.26L938.64 680.02L942.85 683.13L946.8 686.55L950.48 690.28L953.84 694.29L956.88 698.55L959.58 703.03L961.91 707.71L963.87 712.57L965.44 717.56L966.61 722.66L967.38 727.84L967.73 733.06L967.68 738.29L967.21 743.5L966.33 748.66L965.05 753.73L963.37 758.69L961.31 763.5L958.87 768.13L941.22 768.13L941.22 788.04L941.22 788.04L936.82 791.07L932.2 793.73L927.38 796.01L922.38 797.9L917.26 799.39L912.03 800.45L906.73 801.1L901.4 801.31L896.07 801.1L890.77 800.45L885.54 799.39L880.42 797.9L875.42 796.01L870.6 793.73L865.98 791.07L861.58 788.04L861.58 768.13L843.93 768.13L841.49 763.5L839.43 758.69L837.75 753.73L836.47 748.66L835.59 743.5L835.12 738.29L835.07 733.06L835.42 727.84L836.19 722.66L837.36 717.56L838.93 712.57L840.89 707.71L843.22 703.03L845.92 698.55L848.96 694.29L852.32 690.28L856 686.55L859.95 683.13L864.16 680.02L868.61 677.26L873.26 674.85L878.08 672.82L883.05 671.18L888.13 669.93L888.13 669.64L888.13 681.86Z" stroke="#c8646e" stroke-width="3" fill="none"/>
<rect x="891.45" y="701.77" width="19.91" height="33.18" fill="#c8646e" stroke="#c8646e" stroke-width="2" stroke-linejoin="miter"/>
<circle cx="874.86" cy="701.77" r="6.64" fill="none" stroke="#c8646e" stroke-width="2"/>
<circle cx="931.26" cy="701.77" r="6.64" fill="none" stroke="#c8646e" stroke-width="2"/>
<circle cx="858.27" cy="734.95" r="6.64" fill="none" stroke="#c8646e" stroke-width="2"/>
<circle cx="944.53" cy="734.95" r="6.64" fill="none" stroke="#c8646e" stroke-width="2"/>
<circle cx="874.86" cy="768.13" r="6.64" fill="none" stroke="#c8646e" stroke-width="2"/>
<circle cx="927.94" cy="768.13" r="6.64" fill="none" stroke="#c8646e" stroke-width="2"/>
<path d="M802 702L868.22 702" stroke="#c8646e" stroke-width="2"/>
<path d="M1001 702L937.9 702" stroke="#c8646e" stroke-width="2"/>
<path d="M802 735L851.63 735" stroke="#c8646e" stroke-width="2"/>
<path d="M1001 735L951.17 735" stroke="#c8646e" stroke-width="2"/>
<path d="M802 768L835.04 768L835.04 781.4L874.86 781.4L874.86 774.77" stroke="#c8646e" stroke-width="2" fill="none"/>
<path d="M1001 768L967.76 768L967.76 781.4L927.94 781.4L927.94 774.77" stroke="#c8646e" stroke-width="2" fill="none"/>
<path d="M793.7 693.7L810.3 710.3M793.7 710.3L810.3 693.7" stroke="#9fe0e2" stroke-width="2"/>
<path d="M813.62 692.27L814.17 690.15L815.58 688.58L817.52 687.95L819.09 687.95L821.03 688.58L822.6 690.15L823.38 692.27L823.38 693.05L822.6 695.17L821.03 696.74L819.09 697.37L817.52 697.37L815.58 696.74L814.17 695.17L813.62 693.05L813.62 689.52L814.4 686.38L815.97 683.24L817.91 680.88L821.42 680.88" stroke="#c8646e" stroke-width="1.75"/>
<path d="M821.03 714.07L813.24 725.45L823.76 725.45M821.03 714.07L821.03 730.55" stroke="#c8646e" stroke-width="1.75"/>
<path d="M813.62 750.38L814.4 748.82L815.18 748.03L816.75 747.25L819.87 747.25L821.42 748.03L822.21 748.82L822.99 750.38L822.99 751.96L822.21 754.31L820.64 756.27L813.62 763.73L823.38 763.73" stroke="#c8646e" stroke-width="1.75"/>
<path d="M988.5 680.88L980.7 680.88L979.92 687.95L980.7 687.16L983.04 686.38L985.38 686.38L987.72 687.16L988.89 688.74L989.67 691.09L989.67 692.66L988.89 695.01L987.72 696.59L985.38 697.37L983.04 697.37L981.09 696.59L980.31 695.8L979.53 694.23" stroke="#c8646e" stroke-width="1.75"/>
<path d="M979.92 714.07L989.28 714.07L984.21 720.35L986.55 720.35L988.11 721.13L988.89 721.92L989.67 724.27L989.67 725.84L988.89 728.2L987.72 729.77L985.77 730.55L983.04 730.55L981.09 729.77L980.31 728.98L979.53 727.41" stroke="#c8646e" stroke-width="1.75"/>
<path d="M979.92 750.78L981.87 749.6L984.6 747.25L984.6 763.73M979.92 763.73L989.28 763.73" stroke="#c8646e" stroke-width="1.75"/>
<path d="M830.8 825.5L830.8 809.01L836.65 820.79L842.5 809.01L842.5 825.5M849.52 809.01L850.14 809.64L849.52 810.27L848.9 809.64L849.52 809.01M849.52 814.51L849.52 825.5M857.71 814.51L857.71 825.5M857.71 817.65L859.66 815.29L861.22 814.51L863.17 814.51L864.73 815.29L865.51 817.65L865.51 825.5M872.53 809.01L873.15 809.64L872.53 810.27L871.91 809.64L872.53 809.01M872.53 814.51L872.53 825.5M880.33 818.43L892.81 818.43M900.22 825.5L900.22 809.01L904.51 809.01L906.85 809.8L908.57 811.37L909.81 813.33L910.36 815.69L910.36 818.83L909.81 821.18L908.57 823.14L906.85 824.72L904.51 825.5L900.22 825.5M916.76 809.01L916.76 825.5M925.57 825.5L925.57 809.01L935.4 825.5L935.4 809.01M941.95 818.43L954.43 818.43M961.84 820.4L962.39 818.28L963.79 816.71L965.74 816.08L967.3 816.08L969.25 816.71L970.81 818.28L971.59 820.4L971.59 821.18L970.81 823.3L969.25 824.87L967.3 825.5L965.74 825.5L963.79 824.87L962.39 823.3L961.84 821.18L961.84 817.65L962.62 814.51L964.18 811.37L966.13 809.01L969.64 809.01" stroke="#6aa19d" stroke-width="1.75"/>
<path d="M686 735L686 702" stroke="#c8646e" stroke-width="2"/>
<path d="M676 718L686 702L696 718" stroke="#c8646e" stroke-width="2" fill="none"/>
<rect x="681.5" y="764.5" width="8" height="8" fill="none" stroke="#96e07a" stroke-width="1" stroke-linejoin="miter"/>
<path d="M675.74 685.61L675.74 672.26M669.5 678.93L681.98 678.93M697.58 669.51L689.78 669.51L689 676.58L689.78 675.79L692.12 675.01L694.46 675.01L696.8 675.79L697.97 677.37L698.75 679.72L698.75 681.29L697.97 683.64L696.8 685.22L694.46 686L692.12 686L690.17 685.22L689.39 684.43L688.61 682.86M703.27 669.51L708.73 686L714.19 669.51" stroke="#6aa19d" stroke-width="1.75"/>
<path d="M723.4 753.21L723.4 764.2M723.4 757.92L724.18 755.57L725.74 754L727.3 753.21L729.25 753.21M732.76 757.92L742.12 757.92L742.12 756.35L741.34 754.78L740.33 753.84L738.61 753.21L736.43 753.21L734.71 754L733.54 755.57L732.76 757.92L732.76 759.49L733.54 761.85L734.71 763.42L736.43 764.2L738.61 764.2L740.33 763.42L741.89 761.85M755.38 755.17L754.6 754L752.65 753.21L750.31 753.21L748.36 754L747.58 755.57L748.36 757.13L749.92 757.92L753.04 758.71L754.6 759.49L755.38 761.06L755.38 761.85L754.6 763.42L752.65 764.2L750.31 764.2L748.36 763.42L747.58 762.24M760.84 757.92L770.2 757.92L770.2 756.35L769.42 754.78L768.41 753.84L766.69 753.21L764.51 753.21L762.79 754L761.62 755.57L760.84 757.92L760.84 759.49L761.62 761.85L762.79 763.42L764.51 764.2L766.69 764.2L768.41 763.42L769.97 761.85M776.83 747.72L776.83 761.06L777.61 763.42L779.17 764.2L780.73 764.2M774.49 753.21L780.34 753.21" stroke="#4690be" stroke-width="1.75"/>
<path d="M1115.66 695.54L1114.49 696.72L1112.54 697.9L1110.2 697.9L1108.25 697.12L1106.69 695.54L1105.91 693.58L1105.52 691.23L1105.52 688.09L1105.91 685.73L1106.69 683.77L1108.25 682.2L1110.2 681.41L1112.54 681.41L1114.49 682.59L1115.66 683.77M1122.29 681.41L1122.29 697.9L1130.48 697.9M1135.55 681.41L1135.55 697.9M1145.3 681.41L1135.55 691.23M1139.06 687.69L1145.3 697.9" stroke="#4690be" stroke-width="1.75"/>
<path d="M1021.8 780.9L1021.8 764.41L1026.09 764.41L1028.43 765.2L1030.15 766.77L1031.39 768.73L1031.94 771.09L1031.94 774.23L1031.39 776.58L1030.15 778.54L1028.43 780.12L1026.09 780.9L1021.8 780.9M1036.39 780.9L1041.85 764.41L1047.31 780.9M1038.34 775.4L1045.36 775.4M1055.11 764.41L1055.11 780.9M1050.04 764.41L1060.18 764.41M1062.91 780.9L1068.37 764.41L1073.83 780.9M1064.86 775.4L1071.88 775.4" stroke="#4690be" stroke-width="1.75"/>
<path d="M1200 801L1200 818" stroke="#c8646e" stroke-width="2"/>
<path d="M1183.41 818L1216.59 818L1200 834Z" stroke="#c8646e" stroke-width="2" fill="none"/>
<path d="M1190.03 853.23L1188.86 852.05L1186.91 850.88L1184.57 850.88L1182.62 851.66L1181.06 853.23L1180.28 855.19L1179.88 857.55L1179.88 860.69L1180.28 863.04L1181.06 865L1182.62 866.58L1184.57 867.36L1186.91 867.36L1188.86 866.58L1190.03 865L1190.03 860.29L1186.52 860.29M1197.05 867.36L1197.05 850.88L1206.87 867.36L1206.87 850.88M1213.82 867.36L1213.82 850.88L1218.11 850.88L1220.45 851.66L1222.16 853.23L1223.41 855.19L1223.96 857.55L1223.96 860.69L1223.41 863.04L1222.16 865L1220.45 866.58L1218.11 867.36L1213.82 867.36" stroke="#6aa19d" stroke-width="1.75"/>
<path d="M944 519.5H1024M984.5 479V559" stroke="#000" stroke-width="1" stroke-linecap="butt"/>
</svg></div>
<div style="position:absolute;left:37px;top:945px;width:1198px;height:7px;background:#373737"></div>
<div style="position:absolute;left:1235px;top:62px;width:7px;height:883px;background:#363636"></div>
<div style="position:absolute;left:612px;top:947px;width:105px;height:3px;border-radius:2px;background:#8a8a8a;box-shadow:0 0 0 1px #222"></div>
<div style="position:absolute;left:1237px;top:515px;width:3px;height:55px;border-radius:2px;background:#878787;box-shadow:0 0 0 1px #222"></div>
<svg class="ico" style="left:8px;top:30px" width="26" height="26" viewBox="0 0 26 26"><path d="M4.8 10.2h17.6l3 7.5h-24z" fill="#b9b9b9" stroke="#8a8a8a" stroke-width=".7"/><rect x="1.3" y="17.7" width="24.1" height="7" rx="1" fill="#d4d4d4" stroke="#909090" stroke-width=".7"/><rect x="20" y="20.2" width="2" height="2" fill="#18d018"/>
<path d="M13.8 1h7.2v6.4h4.4l-8 8-8-8h4.4z" fill="#4aa80e" stroke="#f2f2f2" stroke-width="1.1" stroke-linejoin="round"/><path d="M14.9 2h5v6.4h3l-5.5 5.5-5.5-5.5h3z" fill="#58c010"/></svg>
<svg class="ico" style="left:51px;top:30px" width="26" height="26" viewBox="0 0 26 26"><path d="M1.8 1.3h16.5l6 6v18h-22.5z" fill="#f4f4f4" stroke="#8c8c8c" stroke-width=".7"/><path d="M18.3 1.3v6h6z" fill="#fff" stroke="#aaa" stroke-width=".6"/>
<path d="M8.8 3v21.5M2.8 15.7h20.5" stroke="#444" stroke-width="1.3"/><path d="M8.8 1.8l-2.4 3.6h4.8zM8.8 25l-2.4-3.6h4.8zM2 15.7l3.6-2.4v4.8zM24 15.7l-3.6-2.4v4.8z" fill="#444"/>
<rect x="13.5" y="20" width="11" height="5.3" fill="#f4f4f4" stroke="#6b3038" stroke-width="1"/><path d="M15.5 22.4h3M20 22.4h3" stroke="#333" stroke-width="1.4"/></svg>
<svg class="ico" style="left:85px;top:30px" width="26" height="26" viewBox="0 0 26 26"><path d="M3.5 .7h13.5l5.3 5.3v8h-18.8z" fill="#f2f2f2" stroke="#999" stroke-width=".6"/><path d="M17 .7v5.3h5.3z" fill="#fff" stroke="#aaa" stroke-width=".6"/>
<rect x=".4" y="12.4" width="25" height="8.6" rx="1.5" fill="#dcdcdc" stroke="#8e8e8e" stroke-width=".7"/><rect x="3.4" y="13.4" width="18.6" height="3" fill="#3a3a3a"/><rect x="3.4" y="16.4" width="18.6" height="1.2" fill="#777"/>
<rect x="3" y="20.7" width="19.6" height="2.8" fill="#fafafa" stroke="#999" stroke-width=".6"/><rect x="21.6" y="18" width="1.2" height="1.2" fill="#20d020"/></svg>
<svg class="ico" style="left:119px;top:30px" width="26" height="26" viewBox="0 0 26 26"><path d="M3.5 8v15.8M5.2 8v15.8M21.2 8v15.8M22.9 8v15.8" stroke="#404040" stroke-width="1.4"/><path d="M1.2 23.4h6M19 23.4h6" stroke="#3c3c3c" stroke-width="1.6"/>
<rect x="1.8" y="3" width="22.8" height="5.4" rx="1.8" fill="#e4e4e4" stroke="#999" stroke-width=".6"/><rect x="4" y="6" width="18" height="1.7" fill="#1a1a1a"/><rect x="20.4" y="4" width="1.5" height="1.5" fill="#20d020"/>
<path d="M7 7.7h11.8v12.3h-7.6l-4.2-3.6z" fill="#efefef" stroke="#a8a8a8" stroke-width=".5"/><path d="M7 16.4h4.2v3.6z" fill="#c8c8c8"/></svg>
<svg class="ico" style="left:162px;top:30px" width="26" height="26" viewBox="0 0 26 26"><rect x="1.6" y="4.3" width="19" height="19.6" rx="1.6" fill="#d9a55c" stroke="#a87830" stroke-width=".8"/><rect x="3" y="6" width="16" height="16" fill="#e2b46e" opacity=".6"/>
<rect x="7.9" y=".8" width="6.4" height="4.8" fill="#b4b0a8" stroke="#8a8680" stroke-width=".6"/><rect x="5.6" y="4.8" width="11" height="1.9" fill="#9c9890"/>
<rect x="9.6" y="11.9" width="14" height="13" fill="#fbfbfb" stroke="#aaa" stroke-width=".6"/><path d="M11.5 14.5h10.5M11.5 16.5h10.5M11.5 18.5h10.5M11.5 20.5h10.5M11.5 22.5h6" stroke="#999" stroke-width=".8"/></svg>
<svg class="ico" style="left:205px;top:30px" width="26" height="26" viewBox="0 0 26 26"><defs><linearGradient id="gu" x1="0" y1="0" x2="0" y2="1"><stop offset="0" stop-color="#fff27a"/><stop offset=".5" stop-color="#f2d818"/><stop offset="1" stop-color="#d8b800"/></linearGradient></defs>
<path d="M1.8 10.7l9-8.6v4.6c5.5 0 9.6 3 9.9 8 .3 4.6-2.6 7.8-5.6 8.6l-2.6-2.8c2.600-1 3.800-2.800 3.500-4.700-.4-2.200-2.400-3-5.200-3v5z" fill="url(#gu)" stroke="#c8a800" stroke-width=".5"/></svg>
<svg class="ico" style="left:239px;top:30px" width="26" height="26" viewBox="0 0 26 26"><defs><linearGradient id="gr" x1="0" y1="0" x2="0" y2="1"><stop offset="0" stop-color="#dff6d0"/><stop offset=".6" stop-color="#b6e69c"/><stop offset="1" stop-color="#a4d88a"/></linearGradient></defs>
<path d="M24.2 10.200l-9-8.600v4.600c-5.500 0-9.600 3-9.900 8-.3 4.600 1.600 8 5 9.600l1.600-2.600c-2-1.200-2.600-3.200-2.200-5.100.5-2.200 2.700-3.200 5.500-3.200v5z" fill="url(#gr)" stroke="#98cc80" stroke-width=".5"/></svg>
<svg class="ico" style="left:282px;top:30px" width="26" height="26" viewBox="0 0 26 26"><path d="M1.5 1h17l6 6v18h-23z" fill="#ececec" stroke="#9a9a9a" stroke-width=".6"/><path d="M18.5 1v6h6z" fill="#fff" stroke="#aaa" stroke-width=".6"/><path d="M4 5h12M4 8h17M4 11h17M4 14h17M4 17h17M4 20h17M4 23h12" stroke="#b8b8b8" stroke-width="1"/><path d="M2.8 3v21" stroke="#999" stroke-width="1" stroke-dasharray="1 2"/><circle cx="10.8" cy="11.9" r="6.2" fill="#ccd8f0" stroke="#4a5a80" stroke-width="1.1"/><path d="M7 9.500h7.600M6.500 12h8.600M7 14.500h7.600" stroke="#8a93a8" stroke-width="1.300"/><path d="M15.600 17.200l6.800 6.600" stroke="#343434" stroke-width="2.500" stroke-linecap="round"/></svg>
<svg class="ico" style="left:316px;top:30px" width="26" height="26" viewBox="0 0 26 26"><path d="M1.5 1h17l6 6v18h-23z" fill="#ececec" stroke="#9a9a9a" stroke-width=".6"/><path d="M18.5 1v6h6z" fill="#fff" stroke="#aaa" stroke-width=".6"/><path d="M4 5h12M4 8h17M4 11h17M4 14h17M4 17h17M4 20h17M4 23h12" stroke="#b8b8b8" stroke-width="1"/><path d="M2.8 3v21" stroke="#999" stroke-width="1" stroke-dasharray="1 2"/><path d="M6.500 12.500a6.600 6 0 0 1 12-3" stroke="#5c5c5c" stroke-width="2.500" fill="none"/><path d="M20.500 4.800v7.200h-7z" fill="#5c5c5c"/><path d="M19.700 15a6.600 6 0 0 1-12 3" stroke="#5c5c5c" stroke-width="2.500" fill="none"/><path d="M5.700 22.700v-7.200h7z" fill="#5c5c5c"/></svg>
<svg class="ico" style="left:359px;top:30px" width="26" height="26" viewBox="0 0 26 26"><path d="M14.500 21.200a8.300 8.300 0 1 1 6.800-8.200" stroke="#8e8e8e" stroke-width="3" fill="none" stroke-linecap="round"/><path d="M14.500 21.200a8.300 8.300 0 1 1 6.800-8.200" stroke="#333" stroke-width="1.200" fill="none" stroke-linecap="round"/><path d="M17.400 13h7.400l-3.600 7.400z" fill="#333" stroke="#8e8e8e" stroke-width=".9"/></svg>
<svg class="ico" style="left:393px;top:30px" width="26" height="26" viewBox="0 0 26 26"><circle cx="13" cy="13" r="9" stroke="#8e8e8e" stroke-width=".9" fill="none"/><circle cx="13" cy="13" r="7.300" stroke="#8e8e8e" stroke-width=".9" fill="none"/><path d="M19.200 20l5 5M20.400 18.800l5.200 4.600" stroke="#8e8e8e" stroke-width=".9"/><path d="M11.700 8.400h2.600v3.300h3.300v2.600h-3.300v3.300h-2.600v-3.300h-3.300v-2.600h3.300z" fill="none" stroke="#8e8e8e" stroke-width=".9"/></svg>
<svg class="ico" style="left:427px;top:30px" width="26" height="26" viewBox="0 0 26 26"><circle cx="13" cy="13" r="9" stroke="#8e8e8e" stroke-width=".9" fill="none"/><circle cx="13" cy="13" r="7.300" stroke="#8e8e8e" stroke-width=".9" fill="none"/><path d="M19.200 20l5 5M20.400 18.800l5.200 4.600" stroke="#8e8e8e" stroke-width=".9"/><rect x="8.400" y="11.700" width="9.200" height="2.600" rx=".6" fill="none" stroke="#8e8e8e" stroke-width=".9"/></svg>
<svg class="ico" style="left:461px;top:30px" width="26" height="26" viewBox="0 0 26 26"><circle cx="13" cy="13" r="9" stroke="#8e8e8e" stroke-width=".9" fill="none"/><circle cx="13" cy="13" r="7.300" stroke="#8e8e8e" stroke-width=".9" fill="none"/><path d="M19.200 20l5 5M20.400 18.800l5.200 4.600" stroke="#8e8e8e" stroke-width=".9"/><rect x="9.200" y="9.200" width="7.600" height="7.600" fill="#e6e6e6" stroke="#bbb" stroke-width=".6"/></svg>
<svg class="ico" style="left:495px;top:30px" width="26" height="26" viewBox="0 0 26 26"><rect x="11.700" y=".8" width="13.800" height="13.400" fill="#d2d2d2" stroke="#8a8a8a" stroke-width=".8" stroke-dasharray="1.500 1"/><circle cx="12.800" cy="13" r="9" stroke="#8e8e8e" stroke-width=".9" fill="none"/><circle cx="12.800" cy="13" r="7.300" stroke="#8e8e8e" stroke-width=".9" fill="none"/><path d="M19.200 20l5 5M20.400 18.800l5.200 4.600" stroke="#8e8e8e" stroke-width=".9"/></svg>
<svg class="ico" style="left:538px;top:30px" width="26" height="26" viewBox="0 0 26 26"><rect x="1.600" y="1.900" width="22.900" height="5.300" fill="#fdfdfd" stroke="#c0c0c0" stroke-width=".5"/><rect x="8.100" y="11.900" width="16.400" height="4.700" fill="#fdfdfd" stroke="#c0c0c0" stroke-width=".5"/><rect x="8.100" y="20.700" width="16.400" height="4.700" fill="#fdfdfd" stroke="#c0c0c0" stroke-width=".5"/><path d="M3.800 7.200v15.800h4.300M3.800 14.200h4.300" stroke="#6e6e6e" stroke-width=".9" fill="none"/></svg>
<svg class="ico" style="left:572px;top:30px" width="26" height="26" viewBox="0 0 26 26"><rect x="1.600" y="1.900" width="22.900" height="5.300" fill="#fdfdfd" stroke="#c0c0c0" stroke-width=".5"/><rect x="8.100" y="11.900" width="16.400" height="4.700" fill="#fdfdfd" stroke="#c0c0c0" stroke-width=".5"/><rect x="8.100" y="20.700" width="16.400" height="4.700" fill="#fdfdfd" stroke="#c0c0c0" stroke-width=".5"/><path d="M3.800 7.200v15.800h4.300M3.800 14.200h4.300" stroke="#6e6e6e" stroke-width=".9" fill="none"/><path d="M16.100 14.200h-9.300c-2.400 0-3-1.400-3-3.400v-4" stroke="#e00012" stroke-width="2.600" fill="none"/><circle cx="16.100" cy="14.200" r="2.400" fill="#e00012"/><path d="M3.800 2l3.600 7h-7.200z" fill="#e00012"/></svg>
<svg class="ico" style="left:615px;top:30px" width="26" height="26" viewBox="0 0 26 26"><path d="M6.5 3.6v18.8l14.1 -9.4z" fill="#f6e7c2" stroke="#b00008" stroke-width="1.6" stroke-linejoin="round"/><path d="M1.8 8.3h4.7M1.8 17.5h4.7M20.6 13.0h3.6" stroke="#c00010" stroke-width="1.3"/><path d="M9.0 9.6h3.0M9.0 16.2h3.0M10.5 14.7v3.0" stroke="#b00010" stroke-width="1.0" stroke-linecap="butt"/></svg>
<svg class="ico" style="left:649px;top:30px" width="26" height="26" viewBox="0 0 26 26"><rect x="3" y="3" width="4.800" height="20.400" fill="#e0101c" stroke="#900" stroke-width=".5"/><rect x="4" y="19.500" width="2.200" height="2.200" fill="#fff"/><rect x="8.300" y="3" width="4.800" height="20.400" fill="#18b030" stroke="#0a7a1c" stroke-width=".5"/><rect x="9.600" y="20" width="2.200" height="2" fill="#fff"/>
<path d="M14.200 5l5.200-1.500 4.600 19-5.200 1.500z" fill="#2e6ee0" stroke="#1c4cb0" stroke-width=".5"/><rect x="14.300" y="20" width="2" height="2" fill="#fff"/>
<path d="M16.400 16.800l7.400 6.800" stroke="#f0f0f0" stroke-width="3.600" stroke-linecap="round"/><path d="M16.400 16.800l7.400 6.800" stroke="#2a2a2a" stroke-width="2.200" stroke-linecap="round"/>
<circle cx="11.900" cy="12.400" r="5.900" fill="#d8dcd8" fill-opacity=".72" stroke="#e8e8e8" stroke-width="1.400"/><circle cx="11.900" cy="12.400" r="6.600" fill="none" stroke="#555" stroke-width=".6"/></svg>
<svg class="ico" style="left:683px;top:30px" width="26" height="26" viewBox="0 0 26 26"><path d="M1.9 6.6h22.3v12.9h-22.3v-4.5l1.6 -2.0l-1.6 -2.0z" fill="#dadada" stroke="#bbb" stroke-width=".4"/><rect x="4.2" y="2.5" width="3.8" height="4.8" fill="#12c428"/><rect x="4.2" y="18.9" width="3.8" height="4.8" fill="#12c428"/><rect x="10.9" y="2.5" width="3.8" height="4.8" fill="#12c428"/><rect x="10.9" y="18.9" width="3.8" height="4.8" fill="#12c428"/><rect x="17.9" y="2.5" width="3.8" height="4.8" fill="#12c428"/><rect x="17.9" y="18.9" width="3.8" height="4.8" fill="#12c428"/></svg>
<svg class="ico" style="left:726px;top:30px" width="26" height="26" viewBox="0 0 26 26"><rect x="2.100" y="1" width="21" height="23.800" fill="#fcfcfc" stroke="#8c8c8c" stroke-width=".8"/><path d="M5 4.500h10M5 7.600h9M5 10.600h7M5 13.600h5" stroke="#8a8a8a" stroke-width="1"/>
<path d="M20.600 3.600l2.700 2.600-14.400 15.600-3.400 1.200 .8-3.600z" fill="#fdfdfd" stroke="#1c1c1c" stroke-width=".9" stroke-linejoin="round"/><path d="M18.800 5.600l2.700 2.600M6.300 19.400l2.600 2.400" stroke="#1c1c1c" stroke-width=".7"/><path d="M5.500 23l1.700-.6-1.200-1.200z" fill="#111"/>
<path d="M6.200 22.600h13.600" stroke="#f00010" stroke-width="1.200"/></svg>
<svg class="ico" style="left:760px;top:30px" width="26" height="26" viewBox="0 0 26 26"><path d="M8 4l-1.800-2.800M18.600 4l1.800-2.800M6 12l-3.600 2M20.600 12l3.600 2M6 17l-3 1.400M20.600 17l3 1.400M7 21.500l-2.600 3M19.600 21.500l2.600 3" stroke="#2a2a2a" stroke-width=".8"/>
<ellipse cx="13.300" cy="7" rx="5.200" ry="3.600" fill="#151515"/><path d="M9.400 6.600l2.400-1.600M17.200 6.600l-2.400-1.600" stroke="#e8c820" stroke-width="1.600"/>
<ellipse cx="13.300" cy="16" rx="7.300" ry="8" fill="#d81820"/><ellipse cx="11.300" cy="13" rx="3.600" ry="3" fill="#f05058" opacity=".55"/><path d="M13.300 8.500v15.500" stroke="#7a0a10" stroke-width=".7"/>
<circle cx="10" cy="13.600" r="1.500" fill="#1a1a1a"/><circle cx="16.600" cy="13.600" r="1.500" fill="#1a1a1a"/><circle cx="9.600" cy="18.600" r="1.500" fill="#1a1a1a"/><circle cx="17" cy="18.600" r="1.500" fill="#1a1a1a"/><circle cx="13.300" cy="10.400" r="1.400" fill="#1a1a1a"/><circle cx="13.300" cy="21.600" r="1.300" fill="#1a1a1a"/></svg>
<svg class="ico" style="left:794px;top:30px" width="26" height="26" viewBox="0 0 26 26"><rect x="1" y=".7" width="15.800" height="15.300" fill="#e8e8e8" stroke="#bdbdbd" stroke-width=".6"/><path d="M5.0 3.0v10.9l8.2 -5.5z" fill="#f6e7c2" stroke="#b00008" stroke-width="1.1" stroke-linejoin="round"/><path d="M2.2 5.7h2.7M2.2 11.0h2.7M13.1 8.4h2.1" stroke="#c00010" stroke-width="0.9"/><path d="M6.4 6.5h1.7M6.4 10.3h1.7M7.3 9.4v1.7" stroke="#b00010" stroke-width="0.7" stroke-linecap="butt"/><rect x="9.200" y="9.500" width="15.800" height="15.300" fill="#e4e4e4" stroke="#bdbdbd" stroke-width=".6"/><path d="M11.2 13.8h11.8v6.8h-11.8v-2.4l0.8 -1.1l-0.8 -1.1z" fill="#dadada" stroke="#bbb" stroke-width=".4"/><rect x="12.4" y="11.6" width="2.0" height="2.5" fill="#12c428"/><rect x="12.4" y="20.3" width="2.0" height="2.5" fill="#12c428"/><rect x="16.0" y="11.6" width="2.0" height="2.5" fill="#12c428"/><rect x="16.0" y="20.3" width="2.0" height="2.5" fill="#12c428"/><rect x="19.7" y="11.6" width="2.0" height="2.5" fill="#12c428"/><rect x="19.7" y="20.3" width="2.0" height="2.5" fill="#12c428"/></svg>
<svg class="ico" style="left:828px;top:30px" width="26" height="26" viewBox="0 0 26 26"><rect x="1.600" y="1.300" width="22.900" height="23.500" fill="#fff"/><rect x="1.600" y="1.300" width="22.900" height="4" fill="#4a92f4"/><rect x="1.600" y="1.300" width="4.200" height="23.500" fill="#4a92f4"/><path d="M1.6 1.300v23.500M5.8 1.300v23.500M10.5 1.300v23.500M15.2 1.300v23.500M19.9 1.300v23.500M24.5 1.300v23.500M1.600 1.3h22.900M1.600 5.3h22.900M1.600 10.2h22.900M1.600 15.1h22.900M1.600 20.0h22.900M1.600 24.8h22.900" stroke="#5a5a5a" stroke-width="1"/></svg>
<svg class="ico" style="left:862px;top:30px" width="26" height="26" viewBox="0 0 26 26"><rect x="3.400" y=".4" width="19.600" height="13.400" fill="#5a5a5a" stroke="#777" stroke-width=".5"/><rect x="6.100" y="2.600" width="14.600" height="9.800" fill="#fdfdfd"/>
<text x="13.400" y="11.200" font-family="Liberation Sans,sans-serif" font-size="10" text-anchor="middle" fill="#333">$</text>
<rect x="1.400" y="13.600" width="23.500" height="11.200" fill="#4a92f4" stroke="#3a78d0" stroke-width=".5"/><text x="13.200" y="22.300" font-family="Liberation Sans,sans-serif" font-size="9.200" text-anchor="middle" fill="#fff" textLength="19.500" lengthAdjust="spacingAndGlyphs">BOM</text><path d="M3.600 23.600h7.600" stroke="#fff" stroke-width="1"/></svg>
<svg class="ico" style="left:905px;top:30px" width="26" height="26" viewBox="0 0 26 26"><rect x=".6" y=".5" width="25.200" height="24.900" fill="#e4c38e" stroke="#0a6a0a" stroke-width=".6"/>
<path d="M1.400 .5v12.400M5.100 .5v9l4.800 5.100v10.800M9.100 .5v6.800l4.500 5v13.100M13 .5v4.800l3.400 3.700h4.600" stroke="#066806" stroke-width="1.800" fill="none" stroke-linejoin="round" stroke-linecap="butt"/>
<rect x="15.800" y=".7" width="9.800" height="4.900" fill="#066806"/><rect x="16.100" y="12.900" width="9.500" height="12.400" fill="#066806"/>
<path d="M3.700 16.600v8.700" stroke="#066806" stroke-width="1.800"/><circle cx="3.700" cy="16.600" r="2.300" fill="#066806"/><circle cx="3.700" cy="16.600" r="1" fill="#fff"/><circle cx="22" cy="9.100" r="2.400" fill="#066806"/><circle cx="22" cy="9.100" r="1.150" fill="#fff"/></svg>
<svg class="ico" style="left:939px;top:30px" width="26" height="26" viewBox="0 0 26 26"><path d="M5.200 .8h20.600v24.800h-20.600z" fill="#f8f8f8"/><path d="M14.300 6.400l5.900-4.800v2h5v5.600h-5v2.600z" fill="#00eaf6" stroke="#101010" stroke-width=".5"/>
<text x="13.100" y="25.500" font-family="Liberation Sans,sans-serif" font-size="10" font-weight="bold" text-anchor="middle" fill="none" stroke="#e6e6e6" stroke-width="1.400" textLength="25" lengthAdjust="spacingAndGlyphs">BACK</text>
<text x="13.100" y="25.500" font-family="Liberation Sans,sans-serif" font-size="10" font-weight="bold" text-anchor="middle" fill="#4a4a4a" textLength="25" lengthAdjust="spacingAndGlyphs">BACK</text></svg>
<div class="sep" style="left:42px;top:30px;height:27px"></div>
<div class="sep" style="left:153px;top:30px;height:27px"></div>
<div class="sep" style="left:196px;top:30px;height:27px"></div>
<div class="sep" style="left:273px;top:30px;height:27px"></div>
<div class="sep" style="left:350px;top:30px;height:27px"></div>
<div class="sep" style="left:529px;top:30px;height:27px"></div>
<div class="sep" style="left:606px;top:30px;height:27px"></div>
<div class="sep" style="left:717px;top:30px;height:27px"></div>
<div class="sep" style="left:896px;top:30px;height:27px"></div>
<div class="sel" style="left:2px;top:66px"></div>
<div class="sel" style="left:2px;top:134px"></div>
<div class="sel" style="left:2px;top:236px"></div>
<svg class="ico" style="left:5px;top:69px" width="26" height="26" viewBox="0 0 26 26"><circle cx="4.1" cy="4.0" r="1.500" fill="#262626"/><circle cx="4.1" cy="9.9" r="1.500" fill="#262626"/><circle cx="4.1" cy="16.0" r="1.500" fill="#262626"/><circle cx="4.1" cy="21.9" r="1.500" fill="#262626"/><circle cx="10.0" cy="4.0" r="1.500" fill="#262626"/><circle cx="10.0" cy="9.9" r="1.500" fill="#262626"/><circle cx="10.0" cy="16.0" r="1.500" fill="#262626"/><circle cx="10.0" cy="21.9" r="1.500" fill="#262626"/><circle cx="15.9" cy="4.0" r="1.500" fill="#262626"/><circle cx="15.9" cy="9.9" r="1.500" fill="#262626"/><circle cx="15.9" cy="16.0" r="1.500" fill="#262626"/><circle cx="15.9" cy="21.9" r="1.500" fill="#262626"/><circle cx="22.0" cy="4.0" r="1.500" fill="#262626"/><circle cx="22.0" cy="9.9" r="1.500" fill="#262626"/><circle cx="22.0" cy="16.0" r="1.500" fill="#262626"/><circle cx="22.0" cy="21.9" r="1.500" fill="#262626"/></svg>
<svg class="ico" style="left:5px;top:103px" width="26" height="26" viewBox="0 0 26 26"><path d="M2.800 18.3h20.400" stroke="#050505" stroke-width="1.200"/><path d="M1.200 18.3l5-2.400-1.200 2.400 1.200 2.400zM24.800 18.3l-5-2.400 1.200 2.400-1.200 2.400z" fill="#050505"/></svg>
<svg class="ico" style="left:5px;top:137px" width="26" height="26" viewBox="0 0 26 26"><text x="13" y="14" font-family="Liberation Sans,sans-serif" font-size="14" text-anchor="middle" fill="#202020" textLength="22" lengthAdjust="spacingAndGlyphs">mm</text><path d="M2.800 18.5h20.400" stroke="#1a1a1a" stroke-width="1.200"/><path d="M1.200 18.5l5-2.400-1.200 2.400 1.200 2.400zM24.800 18.5l-5-2.400 1.200 2.400-1.200 2.400z" fill="#1a1a1a"/></svg>
<svg class="ico" style="left:5px;top:171px" width="26" height="26" viewBox="0 0 26 26"><path d="M8.900 .9v7M8.900 11v14M.9 8.900h7M11 8.900h14" stroke="#a4a4a4" stroke-width="1.800"/><path d="M8.900 .9v1.600M8.900 11v1.600M.9 8.900h1.600M13.500 8.900h1.600" stroke="#e4e4e4" stroke-width="1.800"/><path d="M12.700 12.700l7.800 6.300-3.600 .5 2 4-1.700 .9-2-4.100-2.500 2.400z" fill="#ececec" stroke="#2c2c2c" stroke-width=".5"/></svg>
<svg class="ico" style="left:5px;top:205px" width="26" height="26" viewBox="0 0 26 26"><path d="M15.900 3v19.800" stroke="#a8a8a8" stroke-width="1.400"/><circle cx="15.900" cy="2.400" r="1.900" fill="#333" stroke="#b0b0b0" stroke-width="1"/><circle cx="15.900" cy="23.800" r="1.900" fill="#333" stroke="#b0b0b0" stroke-width="1"/>
<path d="M6.300 3.900v18.700l13.900-9.400z" fill="#f6e7c2" stroke="#b00008" stroke-width="1.700" stroke-linejoin="round"/><path d="M2 8.200h4.300M2 17.300h4.300M20.200 13h3.500" stroke="#c00010" stroke-width="1.400"/><path d="M8.300 9.900h3.200M8.300 16h3.200M9.900 14.400v3.200" stroke="#c00010" stroke-width="1.300"/></svg>
<svg class="ico" style="left:5px;top:239px" width="26" height="26" viewBox="0 0 26 26"><path d="M8.100 1.500v23" stroke="#1e1e1e" stroke-width="2"/><path d="M1.400 18.100h23.100" stroke="#1e1e1e" stroke-width="2"/><path d="M9.500 12.200h4.800v5.400" stroke="#50586a" stroke-width="1" fill="none"/></svg>
<div class="sel" style="left:1244px;top:211px"></div>
<svg class="ico" style="left:1247px;top:69px" width="26" height="26" viewBox="0 0 26 26"><path d="M7.500 4.200l11.300 9.300-5 .7 2.800 5.800-2.500 1.200-2.800-5.900-3.800 3.500z" fill="#e8e8e8" stroke="#3c3c3c" stroke-width=".5"/></svg>
<svg class="ico" style="left:1247px;top:103px" width="26" height="26" viewBox="0 0 26 26"><path d="M.8 3.900H7.300V16H24.400M19.400 1V24.600" stroke="#c8c8c8" stroke-width="2.300" fill="none" stroke-linejoin="miter"/><path d="M24.700 7.400H12.700V22.400H.8" stroke="#ff18e8" stroke-width="2.600" fill="none" stroke-linejoin="miter"/></svg>
<div class="sep" style="left:1248px;top:137px;width:24px;height:1px"></div>
<svg class="ico" style="left:1247px;top:146px" width="26" height="26" viewBox="0 0 26 26"><path d="M6.5 3.6v18.8l14.1 -9.4z" fill="#f6e7c2" stroke="#b00008" stroke-width="1.6" stroke-linejoin="round"/><path d="M1.8 8.3h4.7M1.8 17.5h4.7M20.6 13.0h3.6" stroke="#c00010" stroke-width="1.3"/><path d="M9.0 9.6h3.0M9.0 16.2h3.0M10.5 14.7v3.0" stroke="#b00010" stroke-width="1.0" stroke-linecap="butt"/></svg>
<svg class="ico" style="left:1247px;top:180px" width="26" height="26" viewBox="0 0 26 26"><path d="M13 2.500v11" stroke="#8a0a0a" stroke-width="1.800"/><path d="M4.500 13.800h17" stroke="#8a0a0a" stroke-width="2"/><path d="M7.500 18h11" stroke="#8a0a0a" stroke-width="2"/><path d="M10.800 22h4.400" stroke="#8a0a0a" stroke-width="2"/></svg>
<svg class="ico" style="left:1247px;top:214px" width="26" height="26" viewBox="0 0 26 26"><path d="M4 22.500l18-18" stroke="#088a08" stroke-width="2.800" stroke-linecap="round"/></svg>
<svg class="ico" style="left:1247px;top:248px" width="26" height="26" viewBox="0 0 26 26"><path d="M4 22.500l18-18" stroke="#0808d8" stroke-width="3.600" stroke-linecap="round"/></svg>
<svg class="ico" style="left:1247px;top:282px" width="26" height="26" viewBox="0 0 26 26"><path d="M1.500 5.800h11M1.500 13.500h11" stroke="#505050" stroke-width="2.400"/><path d="M23 2.500v23" stroke="#4a4a4a" stroke-width="3.400"/><path d="M13 5.500l11 7M13 13.800l11 7" stroke="#0a920a" stroke-width="2.200" stroke-linecap="round"/></svg>
<svg class="ico" style="left:1247px;top:316px" width="26" height="26" viewBox="0 0 26 26"><path d="M1.500 5.800h11M1.500 15h11" stroke="#505050" stroke-width="3.200"/><path d="M23 2.500v23" stroke="#4a4a4a" stroke-width="3.400"/><path d="M13 5l11 7.500M13 14.500l11 7.500" stroke="#0a0ad8" stroke-width="4.400" stroke-linecap="round"/></svg>
<svg class="ico" style="left:1247px;top:350px" width="26" height="26" viewBox="0 0 26 26"><path d="M7.500 7l11.500 11.500M19 7l-11.500 11.500" stroke="#1010d8" stroke-width="2"/></svg>
<svg class="ico" style="left:1247px;top:384px" width="26" height="26" viewBox="0 0 26 26"><path d="M1.500 13.500h14M16.500 1.500v24" stroke="#c6c6c6" stroke-width="2.600"/><circle cx="16.500" cy="13.500" r="4.600" fill="#078a07"/></svg>
<svg class="ico" style="left:1247px;top:418px" width="26" height="26" viewBox="0 0 26 26"><text x="12.800" y="19" font-family="Liberation Sans,sans-serif" font-size="21" text-anchor="middle" fill="#0a0a0a">A</text><path d="M2 23h21" stroke="#088a08" stroke-width="2.600" stroke-linecap="round"/></svg>
<svg class="ico" style="left:1247px;top:452px" width="26" height="26" viewBox="0 0 26 26"><path d="M2 6h14.500l4.500 7-4.500 7h-14.500z" fill="#fff" stroke="#9a0a10" stroke-width="1.800" stroke-linejoin="round"/><text x="8.800" y="18.200" font-family="Liberation Sans,sans-serif" font-size="14" text-anchor="middle" fill="#111">A</text><path d="M21.500 13h3.500" stroke="#088a08" stroke-width="2"/></svg>
<svg class="ico" style="left:1247px;top:486px" width="26" height="26" viewBox="0 0 26 26"><path d="M1 1.500h24.500v19l-5 5h-19.500z" fill="#f2f2f2"/><path d="M25.500 20.500h-5v5z" fill="#fff" stroke="#ccc" stroke-width=".5"/><text x="6.500" y="18.800" font-family="Liberation Sans,sans-serif" font-size="14.500" text-anchor="middle" fill="#151515">A</text><path d="M12.500 8.500h7l4 5-4 5h-7z" fill="none" stroke="#c8a010" stroke-width="1.800" stroke-linejoin="round"/><path d="M23.500 13.500h2" stroke="#10a010" stroke-width="1.400"/></svg>
<svg class="ico" style="left:1247px;top:520px" width="26" height="26" viewBox="0 0 26 26"><rect x="1.500" y="2" width="18" height="18" fill="#a8a8a8" stroke="#555" stroke-width=".8"/><rect x="5" y="5.500" width="20" height="20" rx="1" fill="#c4c4c4" stroke="#3a3a3a" stroke-width="1.200"/>
<path d="M14 6.500v18M5.500 15h8.500" stroke="#10901a" stroke-width="1.200"/><rect x="17" y="11.800" width="6.500" height="2.600" fill="none" stroke="#b81018" stroke-width="1.200"/><path d="M14 17l-3 2v4M11 21l3 2.500" stroke="#b81018" stroke-width="1.300" fill="none"/><rect x="12.800" y="6.500" width="2.400" height="4" fill="none" stroke="#b81018" stroke-width="1"/><path d="M7 11.500h4M16.500 19.500h4M16.500 21.500h4" stroke="#666" stroke-width=".8"/></svg>
<svg class="ico" style="left:1247px;top:554px" width="26" height="26" viewBox="0 0 26 26"><path d="M1 3h17v21h-17z" fill="#e9e9e9" stroke="#bbb" stroke-width=".5"/><path d="M3.500 5h17v21h-17z" fill="#f4f4f4" stroke="#bbb" stroke-width=".5"/><path d="M6.500 7h19v14.500l-4.500 4.500h-14.500z" fill="#fafafa" stroke="#bbb" stroke-width=".5"/>
<path d="M13.500 6.800l5.800-5.300v3h5.700v4.600h-5.700v3z" fill="#00e6f2" stroke="#00a0b0" stroke-width=".4"/><text x="11.200" y="24" font-family="Liberation Sans,sans-serif" font-size="10.500" text-anchor="middle" fill="#151515">A</text><path d="M15.500 16h4.500l3 3.800-3 3.800h-4.500z" fill="none" stroke="#c8a010" stroke-width="1.500" stroke-linejoin="round"/><path d="M23 19.800h2.500" stroke="#10a010" stroke-width="1.200"/></svg>
<svg class="ico" style="left:1247px;top:588px" width="26" height="26" viewBox="0 0 26 26"><path d="M1 1h24.500v19.500l-5 5h-19.500z" fill="#f2f2f2"/><path d="M25.500 20.500h-5v5z" fill="#fff" stroke="#ccc" stroke-width=".5"/><path d="M1.200 8.300h6l4 5-4 5h-6" fill="none" stroke="#c8a010" stroke-width="1.900" stroke-linejoin="round"/><text x="18.300" y="19" font-family="Liberation Sans,sans-serif" font-size="14.500" text-anchor="middle" fill="#151515">A</text></svg>
<div class="sep" style="left:1248px;top:622px;width:24px;height:1px"></div>
<svg class="ico" style="left:1247px;top:631px" width="26" height="26" viewBox="0 0 26 26"><rect x="3.500" y="3.500" width="19" height="19" fill="none" stroke="#0c0ce8" stroke-width="2" stroke-dasharray="3.800 2.300" stroke-linecap="butt"/></svg>
<svg class="ico" style="left:1247px;top:665px" width="26" height="26" viewBox="0 0 26 26"><text x="13" y="22.600" font-family="Liberation Serif,serif" font-size="28" text-anchor="middle" fill="#2a2a2a" stroke="#2a2a2a" stroke-width=".5">T</text></svg>
<svg class="ico" style="left:1247px;top:699px" width="26" height="26" viewBox="0 0 26 26"><path d="M2 10.500q0-2 2-2h3.500l2-3.500h7l2 3.500h4q2 0 2 2v10.500h-22.500z" fill="#5a5a5a"/><rect x="19.500" y="5" width="4" height="2.600" fill="#f4f000"/><circle cx="13" cy="14.500" r="5.600" fill="#4a4a4a" stroke="#3a3a3a" stroke-width=".8"/><circle cx="13" cy="14.500" r="2.900" fill="#f00818"/><path d="M1 22h24" stroke="#0c8a0c" stroke-width="1.800"/></svg>
<svg class="ico" style="left:1247px;top:733px" width="26" height="26" viewBox="0 0 26 26"><path d="M4.500 4.500l8-2.500 9 1.500-4 2.200 3.500 1.300-9 1.500-8-1.800 3.800-1z" fill="#f2f2f2"/><path d="M5.500 10.500h15l-2 14h-11z" fill="#f4f4f4"/><path d="M8 10.500l1.500 14M10.800 10.500l.7 14M13 10.500v14M15.400 10.500l-.7 14M18 10.500l-1.500 14M5.800 13.500h14.400M6.300 16.800h13.400M6.800 20.200h12.400" stroke="#353535" stroke-width=".9"/></svg>
<div style="position:absolute;left:0;top:986px;width:1278px;height:22px;background:#353535"></div>
<svg style="position:absolute;left:1250px;top:984px" width="28" height="24" viewBox="1250 984 28 24"><path d="M1256.200 1005.400L1273.800 988.200M1261.600 1005.400L1273.800 993.600M1267 1005.400L1273.800 998.700" stroke="#232323" stroke-width="1.300" stroke-linecap="round"/><path d="M1257.200 1006.200L1274.600 989.200M1262.600 1006.200L1274.600 994.600M1268 1006.200L1274.600 999.700" stroke="#3e3e3e" stroke-width=".8" stroke-linecap="round"/></svg>
<div id="status">
<span style="left:193.6px;transform:scaleX(1.069)">Z 3.65</span><span style="left:265.1px;transform:scaleX(1.078)">X 125.73  Y 102.87</span><span style="left:475.9px;transform:scaleX(1.117)">dx 125.73  dy 102.87  dist 162.45</span><span style="left:805.4px;transform:scaleX(1.116)">grid 1.2700</span><span style="left:1045.3px;transform:scaleX(1.154)">mm</span>
</div>
</body></html>
